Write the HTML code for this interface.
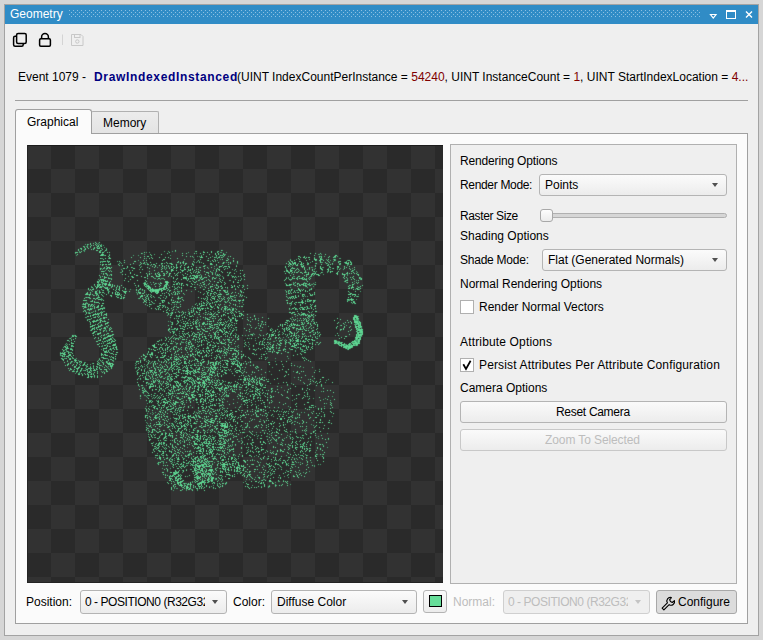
<!DOCTYPE html>
<html><head><meta charset="utf-8">
<style>
*{margin:0;padding:0;box-sizing:border-box}
html,body{width:763px;height:640px;overflow:hidden;background:#d6d6d6;font-family:"Liberation Sans",sans-serif;font-size:12px;color:#000}
.a{position:absolute}
.t{position:absolute;white-space:pre;line-height:14px;font-size:12px}
#win{left:4px;top:4px;width:755px;height:632px;border:1px solid #a3a3a3;background:#efefef}
#title{left:5px;top:5px;width:753px;height:19px;background:#308cc6}
.combo{position:absolute;border:1px solid #b4b4b4;border-radius:3px;background:linear-gradient(#fbfbfb,#ececec)}
.combo .arr{position:absolute;width:0;height:0;border-left:3.7px solid transparent;border-right:3.7px solid transparent;border-top:4.3px solid #505050}
.btn{position:absolute;border:1px solid #b4b4b4;border-radius:3px;background:linear-gradient(#fafafa,#ececec)}
</style></head><body>
<div id="win" class="a"></div>
<div id="title" class="a"></div>
<!-- title dots -->
<svg class="a" style="left:0;top:0" width="763" height="30">
  <defs>
    <pattern id="dots" x="69" y="10" width="4" height="4" patternUnits="userSpaceOnUse">
      <rect x="0" y="0" width="1" height="1" fill="#8cc0e2"/>
      <rect x="2" y="2" width="1" height="1" fill="#8cc0e2"/>
    </pattern>
  </defs>
  <rect x="69" y="10" width="632" height="8" fill="url(#dots)"/>
  <!-- dropdown tri -->
  <path d="M710.5 14.5 L716 14.5 L713.25 18 Z" fill="none" stroke="#fff" stroke-width="1.2"/>
  <!-- maximize -->
  <rect x="726.5" y="10.5" width="9" height="8" fill="none" stroke="#fff" stroke-width="1"/>
  <rect x="726" y="10" width="10" height="2" fill="#fff"/>
  <!-- close -->
  <path d="M746 11.5 L752 17.5 M752 11.5 L746 17.5" stroke="#fff" stroke-width="1.4"/>
</svg>
<div class="t" style="left:10px;top:7px;color:#fff">Geometry</div>

<!-- toolbar icons -->
<svg class="a" style="left:0;top:28px" width="100" height="24">
  <rect x="13.6" y="8.2" width="9.6" height="10" rx="1.5" fill="none" stroke="#000" stroke-width="1.5"/>
  <rect x="16.6" y="5.4" width="9.6" height="10" rx="1.5" fill="#efefef" stroke="#000" stroke-width="1.5"/>
  <path d="M41.6 10.5 V9 A3.4 3.4 0 0 1 48.4 9 V10.5" fill="none" stroke="#000" stroke-width="1.5"/>
  <rect x="39.6" y="10.8" width="10.8" height="7.4" rx="1.2" fill="none" stroke="#000" stroke-width="1.5"/>
  <rect x="62" y="6.5" width="1" height="10.5" fill="#d4d4d4"/>
  <path d="M71.5 6.5 H81 L83 8.5 V17.5 H71.5 Z" fill="none" stroke="#c8c8c8" stroke-width="1"/>
  <rect x="74.5" y="6.5" width="5.5" height="3" fill="none" stroke="#c8c8c8" stroke-width="1"/>
  <circle cx="77.3" cy="13.5" r="1.7" fill="none" stroke="#c8c8c8" stroke-width="1"/>
</svg>

<!-- event line -->
<div class="t" style="left:18px;top:70px">Event 1079 -</div>
<div class="t" style="left:94px;top:70px;font-weight:bold;color:#000080;letter-spacing:0.66px">DrawIndexedInstanced</div>
<div class="t" style="left:237px;top:70px">(UINT IndexCountPerInstance = <span style="color:#800000">54240</span>, UINT InstanceCount = <span style="color:#800000">1</span>, UINT StartIndexLocation = <span style="color:#800000">4...</span></div>
<div class="a" style="left:15px;top:100px;width:733px;height:1px;background:#a0a0a0"></div>

<!-- tabs -->
<div class="a" style="left:15px;top:133px;width:733px;height:491px;border:1px solid #a0a0a0;background:#fbfbfb"></div>
<div class="a" style="left:91px;top:111px;width:68px;height:22px;border:1px solid #b0b0b0;border-bottom:none;border-radius:2px 2px 0 0;background:linear-gradient(#ececec,#e4e4e4)"></div>
<div class="a" style="left:15px;top:109px;width:77px;height:25px;border:1px solid #a0a0a0;border-bottom:none;border-radius:3px 3px 0 0;background:#fbfbfb"></div>
<div class="t" style="left:27px;top:115px">Graphical</div>
<div class="t" style="left:103px;top:116px">Memory</div>

<!-- viewport -->
<svg id="vp" class="a" style="left:27px;top:145px" width="416" height="438">
<defs><filter id="soft" x="0" y="0" width="416" height="438" filterUnits="userSpaceOnUse"><feConvolveMatrix order="3" kernelMatrix="0.01 0.08 0.01 0.08 0.64 0.08 0.01 0.08 0.01" preserveAlpha="false"/></filter><pattern id="chk" width="48" height="48" patternUnits="userSpaceOnUse"><rect width="48" height="48" fill="#2a2a2a"/><rect width="24" height="24" fill="#323232"/><rect x="24" y="24" width="24" height="24" fill="#323232"/></pattern></defs>
<rect width="416" height="438" fill="url(#chk)"/>
<rect x="0" y="0" width="416" height="1" fill="#1c1c1c"/><rect x="0" y="0" width="1" height="438" fill="#252525"/><rect x="0" y="437" width="416" height="1" fill="#232323"/>
<g filter="url(#soft)"><g transform="translate(0 .5)" stroke-width="1"><path d="M68 97h1m3 0h1M63 98h1m2 0h1m2 0h1M60 99h1m2 0h1m4 0h1M64 100h1m1 0h1m2 0h1m1 0h1m1 0h1M56 101h1m6 0h1m6 0h1m0 0h1m2 0h1M57 102h1m2 0h1m6 0h1m4 0h1M53 103h1m0 0h1m3 0h1m2 0h1m5 0h1m2 0h1m0 0h1m0 0h1m1 0h1M51 104h1m2 0h1m3 0h1m5 0h1m1 0h1m8 0h1m3 0h1M51 105h1m17 0h1m0 0h1m2 0h1m4 0h1m69 0h1m45 0h1M54 106h1m17 0h1m96 0h1m14 0h1m6 0h1M48 107h1m0 0h1m0 0h1m2 0h1m18 0h1m0 0h1m1 0h1m0 0h1m3 0h1m1 0h1m34 0h1m24 0h1m33 0h1m0 0h1m2 0h1m3 0h1m5 0h1M114 108h1m25 0h1m14 0h1m3 0h1m7 0h1m5 0h1m14 0h1m2 0h1m4 0h1m86 0h1m4 0h1m4 0h1M50 109h1m23 0h1m0 0h1m0 0h1m46 0h1m10 0h1m41 0h1m5 0h1m5 0h1m2 0h1m4 0h1m101 0h1M73 110h1m0 0h1m0 0h1m2 0h1m3 0h1m41 0h1m30 0h1m33 0h1m3 0h1m1 0h1m1 0h1m89 0h1m20 0h1m0 0h1M81 111h1m35 0h1m2 0h1m0 0h1m37 0h1m3 0h1m1 0h1m8 0h1m4 0h1m16 0h1m6 0h1m67 0h1m0 0h1m4 0h1m14 0h1m1 0h1m7 0h1m4 0h1m0 0h1M82 112h1m21 0h1m8 0h1m10 0h1m7 0h1m5 0h1m2 0h1m31 0h1m0 0h1m0 0h1m7 0h1m3 0h1m3 0h1m0 0h1m1 0h1m78 0h1m2 0h1m0 0h1m1 0h1m1 0h1m0 0h1m11 0h1m6 0h1m4 0h1M73 113h1m4 0h1m3 0h1m0 0h1m33 0h1m4 0h1m2 0h1m17 0h1m6 0h1m30 0h1m8 0h1m9 0h1m5 0h1m64 0h1m6 0h1m8 0h1m5 0h1M76 114h1m59 0h1m0 0h1m35 0h1m13 0h1m7 0h1m5 0h1m70 0h1m9 0h1m4 0h1m0 0h1m0 0h1m3 0h1m0 0h1m6 0h1m5 0h1M97 115h1m18 0h1m2 0h1m15 0h1m35 0h1m9 0h1m3 0h1m2 0h1m10 0h1m0 0h1m5 0h1m56 0h1m3 0h1m11 0h1m8 0h1m3 0h1m0 0h1m2 0h1m3 0h1m6 0h1m13 0h1m0 0h1M76 116h1m0 0h1m0 0h1m1 0h1m1 0h1m9 0h1m14 0h1m0 0h1m42 0h1m4 0h1m9 0h1m19 0h1m19 0h1m3 0h1m50 0h1m2 0h1m7 0h1m0 0h1m11 0h1m7 0h1m7 0h1m10 0h1m0 0h1m9 0h1M73 117h1m7 0h1m15 0h1m15 0h1m3 0h1m5 0h1m15 0h1m10 0h1m2 0h1m2 0h1m15 0h1m18 0h1m4 0h1m4 0h1m1 0h1m6 0h1m51 0h1m2 0h1m1 0h1m0 0h1m5 0h1m18 0h1m4 0h1m3 0h1m8 0h1m6 0h1m0 0h1m1 0h1m1 0h1M83 118h1m22 0h1m7 0h1m1 0h1m12 0h1m4 0h1m0 0h1m4 0h1m2 0h1m0 0h1m8 0h1m2 0h1m1 0h1m0 0h1m5 0h1m10 0h1m6 0h1m0 0h1m11 0h1m6 0h1m55 0h1m2 0h1m0 0h1m2 0h1m0 0h1m0 0h1m5 0h1m1 0h1m4 0h1m7 0h1m9 0h1m5 0h1m7 0h1m5 0h1m0 0h1m0 0h1m2 0h1M73 119h1m1 0h1m0 0h1m1 0h1m0 0h1m1 0h1m0 0h1m0 0h1m7 0h1m11 0h1m9 0h1m6 0h1m0 0h1m2 0h1m1 0h1m0 0h1m16 0h1m0 0h1m3 0h1m8 0h1m6 0h1m17 0h1m0 0h1m4 0h1m11 0h1m59 0h1m1 0h1m0 0h1m1 0h1m1 0h1m1 0h1m2 0h1m0 0h1m5 0h1m13 0h1m6 0h1m1 0h1m8 0h1m10 0h1m0 0h1M75 120h1m16 0h1m2 0h1m16 0h1m15 0h1m3 0h1m2 0h1m3 0h1m9 0h1m4 0h1m2 0h1m8 0h1m28 0h1m66 0h1m6 0h1m0 0h1m5 0h1m11 0h1m11 0h1M79 121h1m20 0h1m24 0h1m2 0h1m6 0h1m1 0h1m3 0h1m2 0h1m1 0h1m6 0h1m7 0h1m2 0h1m11 0h1m0 0h1m14 0h1m0 0h1m0 0h1m2 0h1m0 0h1m0 0h1m1 0h1m7 0h1m48 0h1m2 0h1m12 0h1m0 0h1m0 0h1m11 0h1m4 0h1m8 0h1m7 0h1m0 0h1m5 0h1m4 0h1M77 122h1m2 0h1m0 0h1m0 0h1m1 0h1m15 0h1m3 0h1m8 0h1m6 0h1m6 0h1m16 0h1m2 0h1m1 0h1m0 0h1m2 0h1m3 0h1m2 0h1m0 0h1m7 0h1m2 0h1m0 0h1m6 0h1m3 0h1m7 0h1m3 0h1m5 0h1m55 0h1m6 0h1m9 0h1m1 0h1m4 0h1m10 0h1m9 0h1m7 0h1m7 0h1m7 0h1M73 123h1m2 0h1m2 0h1m0 0h1m1 0h1m0 0h1m12 0h1m0 0h1m8 0h1m0 0h1m14 0h1m12 0h1m6 0h1m3 0h1m2 0h1m15 0h1m11 0h1m12 0h1m9 0h1m63 0h1m1 0h1m0 0h1m2 0h1m6 0h1m4 0h1m10 0h1m0 0h1m11 0h1m10 0h1m4 0h1M73 124h1m41 0h1m18 0h1m9 0h1m0 0h1m7 0h1m3 0h1m0 0h1m2 0h1m1 0h1m1 0h1m3 0h1m1 0h1m17 0h1m1 0h1m0 0h1m4 0h1m10 0h1m54 0h1m5 0h1m1 0h1m5 0h1m7 0h1m8 0h1m0 0h1m4 0h1m0 0h1m10 0h1m10 0h1m3 0h1M81 125h1m23 0h1m21 0h1m16 0h1m0 0h1m3 0h1m5 0h1m0 0h1m6 0h1m3 0h1m5 0h1m15 0h1m2 0h1m20 0h1m1 0h1m43 0h1m0 0h1m2 0h1m0 0h1m3 0h1m16 0h1m15 0h1m23 0h1M74 126h1m0 0h1m0 0h1m5 0h1m1 0h1m10 0h1m26 0h1m11 0h1m0 0h1m3 0h1m4 0h1m10 0h1m4 0h1m8 0h1m1 0h1m5 0h1m5 0h1m5 0h1m4 0h1m62 0h1m2 0h1m2 0h1m0 0h1m6 0h1m6 0h1m8 0h1m15 0h1m1 0h1m5 0h1m12 0h1M103 127h1m9 0h1m17 0h1m8 0h1m10 0h1m1 0h1m9 0h1m4 0h1m2 0h1m0 0h1m6 0h1m0 0h1m14 0h1m4 0h1m2 0h1m57 0h1m0 0h1m2 0h1m1 0h1m1 0h1m0 0h1m2 0h1m0 0h1m2 0h1m0 0h1m2 0h1m12 0h1m8 0h1m6 0h1m9 0h1m5 0h1M76 128h1m1 0h1m0 0h1m23 0h1m15 0h1m2 0h1m5 0h1m1 0h1m5 0h1m2 0h1m2 0h1m0 0h1m3 0h1m2 0h1m7 0h1m5 0h1m5 0h1m10 0h1m3 0h1m16 0h1m4 0h1m5 0h1m44 0h1m16 0h1m5 0h1m3 0h1m0 0h1m1 0h1m20 0h1m0 0h1m4 0h1m3 0h1m0 0h1m1 0h1m1 0h1m2 0h1m1 0h1M76 129h1m7 0h1m10 0h1m2 0h1m8 0h1m14 0h1m5 0h1m2 0h1m0 0h1m4 0h1m4 0h1m6 0h1m10 0h1m17 0h1m6 0h1m4 0h1m1 0h1m24 0h1m48 0h1m12 0h1m0 0h1m0 0h1m2 0h1m0 0h1m1 0h1m1 0h1m0 0h1m0 0h1m18 0h1m4 0h1m0 0h1m0 0h1m12 0h1m0 0h1M72 130h1m7 0h1m3 0h1m24 0h1m0 0h1m9 0h1m8 0h1m2 0h1m0 0h1m2 0h1m0 0h1m4 0h1m5 0h1m1 0h1m5 0h1m6 0h1m1 0h1m0 0h1m0 0h1m1 0h1m2 0h1m8 0h1m9 0h1m9 0h1m14 0h1m46 0h1m13 0h1m6 0h1m6 0h1m0 0h1m24 0h1m13 0h1M75 131h1m1 0h1m27 0h1m8 0h1m5 0h1m3 0h1m0 0h1m3 0h1m0 0h1m0 0h1m0 0h1m8 0h1m2 0h1m22 0h1m0 0h1m1 0h1m3 0h1m7 0h1m22 0h1m0 0h1m1 0h1m2 0h1m1 0h1m3 0h1m53 0h1m0 0h1m6 0h1m3 0h1m33 0h1m8 0h1M73 132h1m3 0h1m0 0h1m0 0h1m25 0h1m0 0h1m10 0h1m0 0h1m7 0h1m19 0h1m9 0h1m0 0h1m0 0h1m7 0h1m1 0h1m0 0h1m0 0h1m3 0h1m2 0h1m1 0h1m6 0h1m20 0h1m57 0h1m4 0h1m4 0h1m6 0h1m33 0h1m2 0h1m3 0h1m1 0h1m6 0h1M77 133h1m3 0h1m0 0h1m15 0h1m21 0h1m10 0h1m0 0h1m13 0h1m3 0h1m5 0h1m1 0h1m0 0h1m1 0h1m1 0h1m0 0h1m0 0h1m0 0h1m0 0h1m5 0h1m2 0h1m8 0h1m1 0h1m0 0h1m3 0h1m3 0h1m62 0h1m5 0h1m1 0h1m1 0h1m2 0h1m1 0h1m0 0h1m1 0h1m5 0h1m33 0h1m8 0h1m5 0h1m1 0h1M73 134h1m0 0h1m0 0h1m0 0h1m7 0h1m18 0h1m33 0h1m11 0h1m4 0h1m6 0h1m5 0h1m6 0h1m0 0h1m5 0h1m11 0h1m14 0h1m8 0h1m40 0h1m3 0h1m1 0h1m5 0h1m5 0h1m1 0h1m0 0h1m2 0h1m41 0h1m2 0h1m6 0h1M72 135h1m1 0h1m1 0h1m0 0h1m0 0h1m18 0h1m12 0h1m7 0h1m41 0h1m10 0h1m7 0h1m2 0h1m12 0h1m15 0h1m1 0h1m43 0h1m61 0h1m0 0h1m10 0h1M70 136h1m5 0h1m1 0h1m0 0h1m0 0h1m2 0h1m17 0h1m17 0h1m18 0h1m0 0h1m0 0h1m5 0h1m1 0h1m17 0h1m2 0h1m7 0h1m5 0h1m3 0h1m5 0h1m12 0h1m73 0h1m37 0h1M70 137h1m0 0h1m2 0h1m0 0h1m6 0h1m43 0h1m11 0h1m0 0h1m0 0h1m0 0h1m9 0h1m15 0h1m0 0h1m6 0h1m0 0h1m13 0h1m0 0h1m2 0h1m2 0h1m8 0h1m3 0h1m0 0h1m56 0h1m51 0h1m4 0h1m3 0h1m1 0h1M76 138h1m1 0h1m0 0h1m2 0h1m24 0h1m9 0h1m0 0h1m9 0h1m4 0h1m0 0h1m4 0h1m0 0h1m9 0h1m1 0h1m1 0h1m0 0h1m8 0h1m8 0h1m8 0h1m15 0h1m71 0h1m0 0h1m4 0h1m1 0h1m0 0h1m2 0h1m47 0h1M67 139h1m2 0h1m1 0h1m0 0h1m1 0h1m1 0h1m0 0h1m0 0h1m1 0h1m0 0h1m0 0h1m1 0h1m31 0h1m0 0h1m0 0h1m7 0h1m4 0h1m5 0h1m0 0h1m0 0h1m5 0h1m0 0h1m1 0h1m4 0h1m4 0h1m5 0h1m4 0h1m5 0h1m0 0h1m3 0h1m3 0h1m3 0h1m7 0h1m61 0h1m2 0h1m0 0h1m0 0h1m1 0h1m3 0h1m1 0h1m1 0h1m0 0h1m0 0h1m4 0h1m6 0h1m36 0h1m0 0h1M70 140h1m1 0h1m5 0h1m2 0h1m0 0h1m0 0h1m1 0h1m1 0h1m6 0h1m13 0h1m2 0h1m5 0h1m3 0h1m11 0h1m3 0h1m1 0h1m14 0h1m1 0h1m3 0h1m13 0h1m14 0h1m14 0h1m2 0h1m4 0h1m7 0h1m38 0h1m0 0h1m1 0h1m5 0h1m3 0h1m0 0h1m2 0h1m1 0h1m4 0h1m38 0h1m12 0h1M68 141h1m1 0h1m0 0h1m1 0h1m2 0h1m8 0h1m4 0h1m1 0h1m18 0h1m6 0h1m1 0h1m0 0h1m0 0h1m5 0h1m3 0h1m4 0h1m0 0h1m0 0h1m5 0h1m18 0h1m18 0h1m0 0h1m0 0h1m5 0h1m1 0h1m0 0h1m10 0h1m1 0h1m2 0h1m5 0h1m53 0h1m8 0h1m41 0h1m3 0h1m7 0h1M65 142h1m3 0h1m0 0h1m1 0h1m0 0h1m0 0h1m2 0h1m2 0h1m3 0h1m4 0h1m2 0h1m3 0h1m24 0h1m0 0h1m0 0h1m12 0h1m0 0h1m1 0h1m2 0h1m7 0h1m1 0h1m1 0h1m12 0h1m5 0h1m4 0h1m4 0h1m4 0h1m2 0h1m3 0h1m2 0h1m1 0h1m3 0h1m0 0h1m5 0h1m3 0h1m108 0h1m0 0h1m0 0h1m4 0h1M61 143h1m7 0h1m8 0h1m0 0h1m0 0h1m11 0h1m5 0h1m14 0h1m6 0h1m0 0h1m1 0h1m1 0h1m6 0h1m1 0h1m0 0h1m0 0h1m2 0h1m8 0h1m5 0h1m26 0h1m7 0h1m0 0h1m3 0h1m25 0h1m50 0h1m12 0h1m36 0h1m0 0h1m1 0h1m4 0h1m0 0h1m2 0h1M61 144h1m1 0h1m1 0h1m0 0h1m7 0h1m5 0h1m0 0h1m4 0h1m2 0h1m1 0h1m6 0h1m10 0h1m2 0h1m2 0h1m5 0h1m1 0h1m0 0h1m0 0h1m0 0h1m1 0h1m0 0h1m0 0h1m0 0h1m0 0h1m0 0h1m0 0h1m1 0h1m0 0h1m0 0h1m2 0h1m5 0h1m20 0h1m7 0h1m7 0h1m1 0h1m21 0h1m8 0h1m46 0h1m6 0h1m0 0h1m3 0h1m7 0h1m41 0h1m3 0h1m0 0h1M64 145h1m11 0h1m11 0h1m3 0h1m2 0h1m13 0h1m1 0h1m5 0h1m4 0h1m0 0h1m1 0h1m0 0h1m0 0h1m0 0h1m0 0h1m0 0h1m0 0h1m2 0h1m0 0h1m4 0h1m2 0h1m10 0h1m4 0h1m21 0h1m0 0h1m7 0h1m1 0h1m0 0h1m2 0h1m0 0h1m15 0h1m48 0h1m1 0h1m7 0h1m0 0h1m1 0h1m2 0h1m3 0h1M68 146h1m0 0h1m2 0h1m16 0h1m6 0h1m0 0h1m0 0h1m0 0h1m2 0h1m20 0h1m1 0h1m0 0h1m1 0h1m0 0h1m0 0h1m0 0h1m2 0h1m7 0h1m4 0h1m2 0h1m3 0h1m24 0h1m4 0h1m0 0h1m11 0h1m2 0h1m13 0h1m44 0h1m1 0h1m5 0h1m5 0h1m4 0h1m1 0h1m40 0h1m6 0h1M60 147h1m2 0h1m4 0h1m3 0h1m0 0h1m1 0h1m0 0h1m4 0h1m3 0h1m2 0h1m1 0h1m0 0h1m5 0h1m0 0h1m12 0h1m0 0h1m0 0h1m3 0h1m6 0h1m3 0h1m1 0h1m0 0h1m7 0h1m6 0h1m1 0h1m24 0h1m7 0h1m5 0h1m0 0h1m9 0h1m0 0h1m5 0h1m2 0h1m5 0h1m1 0h1m49 0h1m1 0h1m2 0h1m15 0h1M59 148h1m0 0h1m7 0h1m0 0h1m15 0h1m2 0h1m3 0h1m5 0h1m13 0h1m0 0h1m1 0h1m0 0h1m12 0h1m0 0h1m4 0h1m1 0h1m3 0h1m2 0h1m3 0h1m1 0h1m1 0h1m3 0h1m23 0h1m2 0h1m0 0h1m1 0h1m2 0h1m11 0h1m2 0h1m6 0h1m49 0h1m0 0h1m1 0h1m17 0h1m40 0h1m0 0h1M58 149h1m0 0h1m0 0h1m1 0h1m0 0h1m1 0h1m4 0h1m3 0h1m4 0h1m8 0h1m0 0h1m0 0h1m0 0h1m0 0h1m28 0h1m20 0h1m5 0h1m1 0h1m25 0h1m10 0h1m3 0h1m0 0h1m0 0h1m0 0h1m4 0h1m0 0h1m12 0h1m45 0h1m15 0h1m0 0h1m6 0h1m1 0h1m1 0h1m33 0h1m0 0h1m0 0h1m1 0h1m0 0h1m0 0h1m0 0h1M62 150h1m3 0h1m2 0h1m1 0h1m3 0h1m7 0h1m0 0h1m8 0h1m3 0h1m16 0h1m0 0h1m1 0h1m2 0h1m3 0h1m8 0h1m8 0h1m38 0h1m1 0h1m6 0h1m16 0h1m1 0h1m3 0h1m1 0h1m52 0h1m6 0h1m7 0h1m0 0h1m43 0h1M84 151h1m4 0h1m4 0h1m18 0h1m0 0h1m0 0h1m4 0h1m2 0h1m2 0h1m12 0h1m39 0h1m5 0h1m0 0h1m1 0h1m2 0h1m0 0h1m0 0h1m9 0h1m0 0h1m0 0h1m8 0h1m44 0h1m5 0h1m0 0h1m1 0h1m2 0h1m4 0h1m46 0h1m3 0h1m2 0h1M59 152h1m1 0h1m0 0h1m8 0h1m0 0h1m17 0h1m0 0h1m4 0h1m0 0h1m15 0h1m4 0h1m5 0h1m20 0h1m5 0h1m2 0h1m16 0h1m8 0h1m3 0h1m12 0h1m3 0h1m17 0h1m42 0h1m1 0h1m1 0h1m1 0h1m0 0h1m51 0h1M57 153h1m5 0h1m2 0h1m0 0h1m1 0h1m0 0h1m22 0h1m0 0h1m1 0h1m15 0h1m2 0h1m3 0h1m1 0h1m11 0h1m4 0h1m11 0h1m0 0h1m1 0h1m20 0h1m1 0h1m1 0h1m6 0h1m0 0h1m0 0h1m4 0h1m1 0h1m1 0h1m3 0h1m1 0h1m1 0h1m56 0h1m1 0h1m1 0h1m1 0h1m56 0h1M68 154h1m2 0h1m0 0h1m0 0h1m42 0h1m1 0h1m2 0h1m22 0h1m10 0h1m21 0h1m2 0h1m2 0h1m3 0h1m2 0h1m4 0h1m1 0h1m7 0h1m10 0h1m63 0h1m0 0h1m38 0h1m0 0h1m1 0h1m0 0h1m0 0h1m0 0h1M56 155h1m0 0h1m0 0h1m0 0h1m5 0h1m10 0h1m40 0h1m1 0h1m2 0h1m5 0h1m6 0h1m0 0h1m0 0h1m6 0h1m1 0h1m9 0h1m22 0h1m4 0h1m6 0h1m2 0h1m6 0h1m2 0h1m1 0h1m0 0h1m0 0h1m2 0h1m0 0h1m0 0h1m1 0h1m0 0h1m42 0h1m0 0h1m14 0h1m6 0h1m0 0h1m0 0h1m1 0h1m0 0h1m36 0h1M64 156h1m0 0h1m1 0h1m49 0h1m0 0h1m5 0h1m10 0h1m12 0h1m1 0h1m2 0h1m20 0h1m5 0h1m8 0h1m0 0h1m2 0h1m6 0h1m11 0h1m52 0h1m9 0h1m2 0h1m1 0h1m6 0h1m32 0h1m5 0h1M67 157h1m1 0h1m0 0h1m0 0h1m44 0h1m2 0h1m2 0h1m2 0h1m9 0h1m5 0h1m3 0h1m0 0h1m0 0h1m2 0h1m25 0h1m4 0h1m3 0h1m1 0h1m10 0h1m3 0h1m57 0h1m3 0h1m4 0h1m1 0h1m0 0h1m1 0h1m0 0h1m0 0h1m9 0h1m37 0h1m1 0h1m0 0h1M56 158h1m1 0h1m1 0h1m11 0h1m2 0h1m0 0h1m56 0h1m38 0h1m1 0h1m2 0h1m2 0h1m2 0h1m19 0h1m56 0h1m1 0h1m0 0h1m3 0h1m7 0h1m2 0h1m49 0h1M56 159h1m0 0h1m0 0h1m2 0h1m0 0h1m1 0h1m0 0h1m52 0h1m3 0h1m0 0h1m29 0h1m14 0h1m3 0h1m6 0h1m2 0h1m5 0h1m2 0h1m1 0h1m12 0h1m1 0h1m59 0h1m4 0h1m9 0h1M61 160h1m2 0h1m1 0h1m4 0h1m2 0h1m0 0h1m44 0h1m11 0h1m0 0h1m1 0h1m34 0h1m3 0h1m0 0h1m0 0h1m2 0h1m3 0h1m8 0h1m9 0h1m5 0h1m64 0h1m10 0h1m3 0h1M55 161h1m0 0h1m1 0h1m2 0h1m1 0h1m1 0h1m1 0h1m2 0h1m0 0h1m2 0h1m47 0h1m7 0h1m0 0h1m4 0h1m10 0h1m5 0h1m19 0h1m9 0h1m0 0h1m5 0h1m6 0h1m0 0h1m13 0h1m1 0h1m0 0h1m67 0h1m3 0h1m0 0h1M57 162h1m0 0h1m8 0h1m1 0h1m0 0h1m61 0h1m2 0h1m2 0h1m1 0h1m5 0h1m3 0h1m0 0h1m15 0h1m16 0h1m0 0h1m4 0h1m0 0h1m3 0h1m2 0h1m1 0h1m66 0h1m6 0h1m0 0h1m1 0h1m2 0h1m3 0h1M56 163h1m6 0h1m3 0h1m5 0h1m0 0h1m0 0h1m1 0h1m46 0h1m3 0h1m2 0h1m9 0h1m2 0h1m21 0h1m1 0h1m1 0h1m0 0h1m0 0h1m1 0h1m0 0h1m0 0h1m1 0h1m1 0h1m0 0h1m9 0h1m5 0h1m0 0h1m7 0h1m55 0h1m2 0h1m0 0h1m1 0h1m3 0h1m3 0h1m3 0h1m3 0h1m3 0h1M60 164h1m0 0h1m1 0h1m0 0h1m6 0h1m0 0h1m2 0h1m53 0h1m1 0h1m1 0h1m6 0h1m5 0h1m26 0h1m1 0h1m7 0h1m10 0h1m3 0h1m2 0h1m0 0h1m2 0h1m0 0h1m2 0h1m58 0h1m4 0h1m1 0h1m0 0h1m0 0h1m1 0h1m6 0h1M57 165h1m4 0h1m76 0h1m2 0h1m2 0h1m18 0h1m1 0h1m5 0h1m0 0h1m4 0h1m12 0h1m13 0h1M56 166h1m1 0h1m9 0h1m67 0h1m14 0h1m3 0h1m10 0h1m2 0h1m26 0h1m7 0h1m3 0h1m3 0h1m3 0h1m53 0h1m10 0h1m6 0h1m0 0h1M59 167h1m13 0h1m1 0h1m63 0h1m0 0h1m4 0h1m2 0h1m3 0h1m3 0h1m1 0h1m3 0h1m1 0h1m5 0h1m1 0h1m5 0h1m4 0h1m7 0h1m0 0h1m5 0h1m4 0h1m1 0h1m3 0h1m52 0h1m0 0h1m1 0h1m0 0h1m0 0h1m6 0h1m7 0h1M59 168h1m2 0h1m5 0h1m1 0h1m1 0h1m1 0h1m4 0h1m61 0h1m3 0h1m10 0h1m5 0h1m21 0h1m2 0h1m12 0h1m0 0h1m2 0h1m7 0h1m0 0h1m0 0h1m49 0h1m6 0h1m4 0h1m0 0h1M66 169h1m0 0h1m0 0h1m0 0h1m1 0h1m2 0h1m2 0h1m0 0h1m0 0h1m61 0h1m2 0h1m10 0h1m6 0h1m4 0h1m4 0h1m5 0h1m1 0h1m2 0h1m0 0h1m1 0h1m2 0h1m0 0h1m5 0h1m0 0h1m9 0h1m6 0h1m0 0h1m4 0h1m46 0h1m0 0h1m3 0h1m1 0h1m0 0h1m0 0h1m1 0h1m1 0h1m3 0h1m1 0h1M63 170h1m1 0h1m0 0h1m7 0h1m4 0h1m63 0h1m5 0h1m2 0h1m1 0h1m10 0h1m19 0h1m8 0h1m1 0h1m10 0h1m4 0h1m1 0h1m1 0h1m10 0h1m42 0h1m7 0h1m0 0h1m1 0h1m0 0h1m1 0h1m0 0h1m2 0h1m38 0h1m0 0h1M60 171h1m0 0h1m1 0h1m6 0h1m1 0h1m79 0h1m4 0h1m5 0h1m0 0h1m8 0h1m10 0h1m1 0h1m0 0h1m3 0h1m2 0h1m13 0h1m1 0h1m1 0h1m14 0h1m53 0h1m1 0h1m43 0h1m0 0h1m0 0h1m0 0h1M67 172h1m0 0h1m2 0h1m4 0h1m0 0h1m1 0h1m63 0h1m11 0h1m1 0h1m18 0h1m1 0h1m4 0h1m17 0h1m21 0h1m11 0h1m29 0h1m14 0h1m45 0h1m0 0h1m0 0h1m0 0h1m0 0h1M64 173h1m8 0h1m2 0h1m0 0h1m69 0h1m3 0h1m7 0h1m20 0h1m4 0h1m2 0h1m4 0h1m8 0h1m2 0h1m0 0h1m1 0h1m6 0h1m12 0h1m12 0h1m21 0h1m9 0h1m2 0h1m1 0h1m2 0h1m28 0h1m15 0h1m0 0h1m1 0h1m0 0h1m0 0h1M62 174h1m9 0h1m8 0h1m73 0h1m6 0h1m3 0h1m3 0h1m9 0h1m0 0h1m0 0h1m9 0h1m1 0h1m8 0h1m4 0h1m11 0h1m4 0h1m2 0h1m37 0h1m1 0h1m8 0h1m1 0h1m5 0h1m0 0h1m26 0h1m12 0h1m0 0h1m2 0h1M60 175h1m8 0h1m0 0h1m2 0h1m0 0h1m75 0h1m18 0h1m16 0h1m4 0h1m1 0h1m9 0h1m4 0h1m0 0h1m0 0h1m10 0h1m9 0h1m27 0h1m0 0h1m0 0h1m5 0h1m4 0h1m1 0h1m1 0h1m2 0h1m1 0h1m25 0h1m12 0h1m6 0h1M62 176h1m2 0h1m0 0h1m0 0h1m0 0h1m4 0h1m1 0h1m1 0h1m0 0h1m72 0h1m4 0h1m1 0h1m7 0h1m1 0h1m11 0h1m1 0h1m0 0h1m0 0h1m1 0h1m11 0h1m4 0h1m5 0h1m13 0h1m11 0h1m26 0h1m2 0h1m13 0h1m0 0h1m3 0h1m38 0h1m3 0h1m0 0h1m0 0h1m0 0h1m1 0h1M63 177h1m2 0h1m6 0h1m6 0h1m0 0h1m63 0h1m5 0h1m8 0h1m4 0h1m3 0h1m2 0h1m3 0h1m13 0h1m2 0h1m0 0h1m1 0h1m2 0h1m38 0h1m19 0h1m0 0h1m14 0h1m6 0h1m5 0h1m1 0h1m21 0h1m6 0h1m2 0h1m2 0h1m2 0h1m0 0h1m0 0h1m0 0h1m1 0h1m0 0h1M71 178h1m6 0h1m0 0h1m0 0h1m64 0h1m4 0h1m5 0h1m0 0h1m1 0h1m3 0h1m2 0h1m1 0h1m6 0h1m0 0h1m0 0h1m2 0h1m1 0h1m1 0h1m8 0h1m3 0h1m4 0h1m4 0h1m1 0h1m21 0h1m28 0h1m3 0h1m1 0h1m8 0h1m4 0h1m0 0h1m1 0h1m3 0h1m22 0h1m5 0h1m7 0h1m5 0h1m0 0h1m1 0h1M63 179h1m4 0h1m1 0h1m3 0h1m3 0h1m66 0h1m12 0h1m7 0h1m8 0h1m0 0h1m1 0h1m3 0h1m0 0h1m3 0h1m0 0h1m0 0h1m0 0h1m1 0h1m1 0h1m0 0h1m0 0h1m4 0h1m2 0h1m15 0h1m15 0h1m1 0h1m14 0h1m1 0h1m1 0h1m0 0h1m5 0h1m1 0h1m0 0h1m0 0h1m1 0h1m3 0h1m1 0h1m6 0h1m4 0h1m1 0h1m38 0h1m1 0h1m1 0h1M65 180h1m0 0h1m0 0h1m6 0h1m6 0h1m59 0h1m10 0h1m5 0h1m2 0h1m1 0h1m0 0h1m7 0h1m11 0h1m0 0h1m6 0h1m2 0h1m2 0h1m2 0h1m1 0h1m1 0h1m17 0h1m9 0h1m19 0h1m1 0h1m4 0h1m1 0h1m1 0h1m2 0h1m1 0h1m0 0h1m1 0h1m11 0h1m5 0h1m23 0h1m13 0h1m2 0h1m0 0h1m0 0h1M63 181h1m0 0h1m0 0h1m5 0h1m0 0h1m0 0h1m5 0h1m64 0h1m11 0h1m1 0h1m10 0h1m7 0h1m4 0h1m0 0h1m6 0h1m9 0h1m1 0h1m30 0h1m17 0h1m3 0h1m7 0h1m11 0h1m14 0h1m19 0h1m6 0h1m5 0h1m4 0h1m0 0h1m0 0h1m0 0h1m1 0h1m0 0h1M67 182h1m1 0h1m1 0h1m5 0h1m5 0h1m73 0h1m4 0h1m6 0h1m13 0h1m1 0h1m1 0h1m3 0h1m5 0h1m6 0h1m3 0h1m0 0h1m14 0h1m10 0h1m23 0h1m1 0h1m3 0h1m0 0h1m0 0h1m8 0h1m5 0h1m3 0h1m22 0h1m7 0h1m4 0h1m5 0h1m0 0h1m1 0h1m0 0h1m0 0h1M65 183h1m0 0h1m2 0h1m4 0h1m2 0h1m0 0h1m3 0h1m1 0h1m57 0h1m4 0h1m0 0h1m1 0h1m2 0h1m1 0h1m4 0h1m3 0h1m0 0h1m4 0h1m3 0h1m3 0h1m1 0h1m1 0h1m3 0h1m2 0h1m7 0h1m0 0h1m7 0h1m10 0h1m10 0h1m3 0h1m22 0h1m1 0h1m1 0h1m2 0h1m3 0h1m2 0h1m0 0h1m2 0h1m2 0h1m7 0h1m5 0h1m25 0h1m12 0h1m0 0h1M65 184h1m1 0h1m2 0h1m1 0h1m0 0h1m9 0h1m57 0h1m0 0h1m6 0h1m0 0h1m5 0h1m0 0h1m12 0h1m0 0h1m0 0h1m2 0h1m9 0h1m7 0h1m2 0h1m25 0h1m20 0h1m6 0h1m8 0h1m1 0h1m0 0h1m8 0h1m0 0h1m0 0h1m3 0h1m11 0h1m23 0h1m0 0h1m1 0h1m7 0h1m4 0h1m1 0h1m0 0h1m0 0h1m0 0h1m0 0h1M64 185h1m12 0h1m4 0h1m58 0h1m34 0h1m0 0h1m5 0h1m6 0h1m1 0h1m0 0h1m0 0h1m2 0h1m8 0h1m12 0h1m23 0h1m4 0h1m8 0h1m2 0h1m17 0h1m0 0h1m1 0h1m3 0h1m0 0h1m36 0h1m6 0h1m0 0h1m0 0h1m0 0h1m0 0h1M67 186h1m1 0h1m6 0h1m7 0h1m0 0h1m59 0h1m9 0h1m0 0h1m16 0h1m4 0h1m0 0h1m0 0h1m8 0h1m4 0h1m0 0h1m3 0h1m2 0h1m2 0h1m16 0h1m23 0h1m1 0h1m3 0h1m4 0h1m4 0h1m0 0h1m7 0h1m3 0h1m45 0h1m7 0h1m3 0h1m0 0h1m0 0h1M66 187h1m0 0h1m5 0h1m69 0h1m2 0h1m14 0h1m4 0h1m4 0h1m14 0h1m1 0h1m2 0h1m3 0h1m2 0h1m0 0h1m0 0h1m44 0h1m17 0h1m0 0h1m5 0h1m11 0h1m0 0h1m4 0h1m1 0h1m1 0h1m37 0h1m0 0h1m0 0h1m0 0h1m0 0h1m0 0h1M65 188h1m0 0h1m4 0h1m0 0h1m0 0h1m6 0h1m0 0h1m64 0h1m8 0h1m1 0h1m2 0h1m4 0h1m1 0h1m7 0h1m6 0h1m4 0h1m9 0h1m3 0h1m2 0h1m35 0h1m6 0h1m8 0h1m7 0h1m0 0h1m1 0h1m1 0h1m5 0h1m1 0h1m10 0h1m21 0h1m19 0h1m0 0h1m3 0h1M70 189h1m0 0h1m5 0h1m1 0h1m5 0h1m0 0h1m61 0h1m9 0h1m2 0h1m3 0h1m2 0h1m0 0h1m2 0h1m1 0h1m2 0h1m9 0h1m0 0h1m2 0h1m4 0h1m1 0h1m4 0h1m20 0h1m0 0h1m13 0h1m2 0h1m1 0h1m0 0h1m0 0h1m5 0h1m5 0h1m8 0h1m8 0h1m9 0h1m0 0h1m5 0h1m28 0h1m6 0h1m1 0h1m0 0h1m0 0h1m0 0h1m0 0h1M45 190h1m2 0h1m17 0h1m7 0h1m1 0h1m4 0h1m1 0h1m0 0h1m71 0h1m5 0h1m1 0h1m2 0h1m4 0h1m8 0h1m1 0h1m4 0h1m17 0h1m1 0h1m6 0h1m5 0h1m3 0h1m7 0h1m2 0h1m5 0h1m2 0h1m0 0h1m1 0h1m2 0h1m8 0h1m3 0h1m1 0h1m0 0h1m1 0h1m1 0h1m11 0h1m8 0h1m18 0h1m17 0h1m1 0h1m0 0h1m0 0h1m0 0h1M45 191h1m0 0h1m1 0h1m0 0h1m30 0h1m0 0h1m0 0h1m0 0h1m61 0h1m7 0h1m0 0h1m2 0h1m4 0h1m3 0h1m0 0h1m7 0h1m1 0h1m0 0h1m9 0h1m1 0h1m3 0h1m3 0h1m1 0h1m7 0h1m2 0h1m30 0h1m1 0h1m23 0h1m6 0h1m1 0h1m3 0h1m36 0h1m0 0h1m9 0h1m1 0h1M68 192h1m5 0h1m4 0h1m5 0h1m52 0h1m2 0h1m2 0h1m7 0h1m2 0h1m4 0h1m8 0h1m1 0h1m3 0h1m7 0h1m3 0h1m1 0h1m1 0h1m0 0h1m9 0h1m1 0h1m5 0h1m20 0h1m9 0h1m6 0h1m0 0h1m2 0h1m8 0h1m7 0h1m1 0h1m3 0h1m9 0h1m2 0h1m25 0h1m13 0h1m0 0h1m0 0h1m0 0h1m0 0h1m0 0h1M43 193h1m4 0h1m18 0h1m3 0h1m4 0h1m0 0h1m0 0h1m4 0h1m55 0h1m3 0h1m2 0h1m2 0h1m16 0h1m5 0h1m5 0h1m0 0h1m7 0h1m1 0h1m1 0h1m19 0h1m8 0h1m3 0h1m11 0h1m6 0h1m4 0h1m2 0h1m13 0h1m3 0h1m4 0h1m3 0h1m0 0h1m10 0h1m21 0h1m4 0h1m11 0h1m0 0h1m2 0h1M46 194h1m26 0h1m2 0h1m5 0h1m0 0h1m0 0h1m2 0h1m54 0h1m5 0h1m2 0h1m3 0h1m0 0h1m0 0h1m1 0h1m5 0h1m2 0h1m3 0h1m12 0h1m10 0h1m3 0h1m0 0h1m4 0h1m3 0h1m0 0h1m25 0h1m2 0h1m22 0h1m6 0h1m0 0h1m9 0h1m0 0h1m1 0h1m0 0h1m43 0h1m1 0h1m0 0h1m0 0h1M40 195h1m0 0h1m2 0h1m27 0h1m0 0h1m8 0h1m2 0h1m2 0h1m43 0h1m5 0h1m23 0h1m5 0h1m5 0h1m2 0h1m1 0h1m12 0h1m4 0h1m7 0h1m47 0h1m0 0h1m4 0h1m3 0h1m2 0h1m2 0h1m0 0h1m5 0h1m3 0h1m4 0h1m1 0h1m19 0h1m0 0h1m18 0h1m3 0h1m0 0h1M47 196h1m21 0h1m0 0h1m4 0h1m1 0h1m0 0h1m1 0h1m3 0h1m1 0h1m0 0h1m42 0h1m0 0h1m9 0h1m2 0h1m1 0h1m12 0h1m3 0h1m6 0h1m1 0h1m1 0h1m9 0h1m23 0h1m24 0h1m1 0h1m16 0h1m5 0h1m4 0h1m5 0h1m0 0h1m0 0h1m1 0h1m1 0h1m0 0h1m1 0h1m2 0h1m25 0h1m0 0h1m0 0h1m15 0h1m0 0h1m0 0h1m0 0h1m2 0h1m0 0h1M44 197h1m37 0h1m1 0h1m76 0h1m0 0h1m11 0h1m6 0h1m0 0h1m3 0h1m6 0h1m0 0h1m3 0h1m3 0h1m0 0h1m0 0h1m13 0h1m2 0h1m10 0h1m4 0h1m2 0h1m18 0h1m1 0h1m28 0h1m2 0h1m14 0h1m0 0h1m1 0h1m0 0h1m1 0h1m9 0h1m3 0h1m0 0h1m1 0h1M44 198h1m0 0h1m0 0h1m25 0h1m1 0h1m5 0h1m0 0h1m1 0h1m52 0h1m6 0h1m0 0h1m5 0h1m2 0h1m7 0h1m2 0h1m15 0h1m6 0h1m2 0h1m0 0h1m2 0h1m0 0h1m0 0h1m0 0h1m9 0h1m21 0h1m12 0h1m7 0h1m2 0h1m0 0h1m3 0h1m4 0h1m2 0h1m0 0h1m2 0h1m11 0h1m2 0h1m6 0h1m14 0h1m0 0h1m1 0h1m0 0h1m1 0h1m0 0h1m2 0h1m4 0h1m0 0h1m1 0h1m0 0h1m0 0h1m0 0h1m0 0h1m0 0h1m0 0h1m0 0h1M42 199h1m27 0h1m0 0h1m14 0h1m0 0h1m0 0h1m38 0h1m3 0h1m1 0h1m1 0h1m3 0h1m13 0h1m8 0h1m1 0h1m9 0h1m5 0h1m2 0h1m14 0h1m2 0h1m16 0h1m13 0h1m2 0h1m3 0h1m3 0h1m2 0h1m4 0h1m0 0h1m10 0h1m3 0h1m1 0h1m1 0h1m2 0h1m10 0h1m2 0h1m2 0h1m19 0h1m2 0h1m0 0h1m0 0h1m0 0h1m3 0h1m0 0h1m3 0h1m2 0h1m0 0h1M39 200h1m4 0h1m0 0h1m31 0h1m0 0h1m1 0h1m4 0h1m0 0h1m0 0h1m37 0h1m0 0h1m0 0h1m6 0h1m3 0h1m1 0h1m18 0h1m5 0h1m0 0h1m5 0h1m1 0h1m7 0h1m0 0h1m4 0h1m12 0h1m24 0h1m10 0h1m7 0h1m3 0h1m3 0h1m11 0h1m1 0h1m0 0h1m0 0h1m6 0h1m1 0h1m33 0h1m0 0h1m0 0h1m1 0h1m2 0h1m0 0h1m1 0h1m1 0h1m0 0h1m0 0h1m0 0h1m1 0h1M37 201h1m0 0h1m1 0h1m3 0h1m1 0h1m25 0h1m7 0h1m1 0h1m6 0h1m36 0h1m0 0h1m14 0h1m4 0h1m13 0h1m1 0h1m7 0h1m16 0h1m2 0h1m10 0h1m14 0h1m22 0h1m4 0h1m12 0h1m5 0h1m0 0h1m0 0h1m9 0h1m0 0h1m3 0h1m3 0h1m28 0h1m2 0h1m0 0h1m0 0h1m0 0h1m0 0h1m0 0h1m0 0h1m0 0h1m0 0h1M38 202h1m1 0h1m38 0h1m6 0h1m1 0h1m0 0h1m37 0h1m0 0h1m0 0h1m3 0h1m0 0h1m5 0h1m0 0h1m4 0h1m2 0h1m4 0h1m4 0h1m3 0h1m3 0h1m12 0h1m4 0h1m0 0h1m10 0h1m3 0h1m35 0h1m3 0h1m2 0h1m0 0h1m0 0h1m5 0h1m15 0h1m2 0h1m7 0h1m1 0h1m2 0h1m31 0h1m0 0h1m0 0h1m0 0h1m1 0h1m0 0h1m0 0h1m0 0h1M39 203h1m0 0h1m0 0h1m34 0h1m0 0h1m0 0h1m0 0h1m3 0h1m2 0h1m2 0h1m42 0h1m2 0h1m4 0h1m5 0h1m4 0h1m6 0h1m3 0h1m1 0h1m4 0h1m6 0h1m2 0h1m1 0h1m9 0h1m2 0h1m6 0h1m1 0h1m0 0h1m0 0h1m2 0h1m13 0h1m8 0h1m3 0h1m3 0h1m3 0h1m18 0h1m10 0h1m5 0h1m5 0h1m33 0h1m1 0h1m0 0h1M35 204h1m2 0h1m4 0h1m0 0h1m38 0h1m3 0h1m1 0h1m34 0h1m1 0h1m3 0h1m4 0h1m2 0h1m1 0h1m2 0h1m2 0h1m5 0h1m1 0h1m3 0h1m6 0h1m5 0h1m12 0h1m12 0h1m1 0h1m0 0h1m6 0h1m18 0h1m0 0h1m5 0h1m6 0h1m1 0h1m0 0h1m2 0h1m9 0h1m1 0h1m5 0h1m0 0h1m14 0h1m2 0h1m37 0h1M36 205h1m8 0h1m30 0h1m4 0h1m45 0h1m0 0h1m7 0h1m1 0h1m20 0h1m16 0h1m2 0h1m1 0h1m0 0h1m1 0h1m5 0h1m1 0h1m1 0h1m6 0h1m1 0h1m0 0h1m2 0h1m0 0h1m0 0h1m1 0h1m16 0h1m22 0h1m0 0h1m3 0h1m20 0h1M40 206h1m36 0h1m0 0h1m0 0h1m1 0h1m4 0h1m34 0h1m11 0h1m6 0h1m2 0h1m4 0h1m1 0h1m12 0h1m0 0h1m3 0h1m3 0h1m3 0h1m2 0h1m2 0h1m5 0h1m1 0h1m1 0h1m1 0h1m1 0h1m2 0h1m10 0h1m3 0h1m28 0h1m1 0h1m1 0h1m10 0h1M37 207h1m3 0h1m2 0h1m33 0h1m1 0h1m1 0h1m6 0h1m0 0h1m30 0h1m9 0h1m4 0h1m1 0h1m9 0h1m5 0h1m5 0h1m9 0h1m0 0h1m0 0h1m4 0h1m2 0h1m4 0h1m7 0h1m3 0h1m0 0h1m1 0h1m10 0h1m33 0h1m3 0h1m0 0h1m0 0h1m9 0h1m15 0h1m0 0h1M33 208h1m0 0h1m0 0h1m0 0h1m0 0h1m3 0h1m3 0h1m28 0h1m9 0h1m0 0h1m38 0h1m0 0h1m8 0h1m0 0h1m2 0h1m8 0h1m17 0h1m4 0h1m2 0h1m0 0h1m6 0h1m2 0h1m13 0h1m7 0h1m1 0h1m2 0h1m13 0h1m0 0h1m12 0h1m10 0h1m3 0h1m18 0h1M36 209h1m0 0h1m0 0h1m3 0h1m0 0h1m30 0h1m0 0h1m1 0h1m0 0h1m7 0h1m1 0h1m0 0h1m26 0h1m3 0h1m1 0h1m0 0h1m0 0h1m0 0h1m18 0h1m4 0h1m1 0h1m9 0h1m1 0h1m1 0h1m0 0h1m1 0h1m10 0h1m11 0h1m13 0h1m0 0h1m1 0h1m2 0h1m2 0h1m1 0h1m10 0h1m1 0h1m6 0h1m0 0h1m32 0h1m3 0h1M35 210h1m5 0h1m0 0h1m0 0h1m2 0h1m27 0h1m3 0h1m0 0h1m0 0h1m35 0h1m0 0h1m17 0h1m1 0h1m0 0h1m16 0h1m7 0h1m0 0h1m6 0h1m6 0h1m0 0h1m4 0h1m4 0h1m7 0h1m18 0h1m49 0h1M35 211h1m1 0h1m1 0h1m0 0h1m3 0h1m37 0h1m1 0h1m3 0h1m25 0h1m3 0h1m0 0h1m3 0h1m13 0h1m10 0h1m0 0h1m2 0h1m2 0h1m1 0h1m1 0h1m0 0h1m5 0h1m8 0h1m3 0h1m10 0h1m1 0h1m12 0h1m2 0h1m0 0h1m4 0h1m0 0h1m2 0h1m15 0h1m25 0h1M41 212h1m3 0h1m29 0h1m0 0h1m8 0h1m0 0h1m31 0h1m5 0h1m4 0h1m0 0h1m2 0h1m0 0h1m0 0h1m0 0h1m6 0h1m0 0h1m2 0h1m5 0h1m0 0h1m1 0h1m3 0h1m14 0h1m11 0h1m1 0h1m7 0h1m11 0h1m4 0h1m6 0h1m16 0h1m36 0h1M34 213h1m4 0h1m3 0h1m2 0h1m29 0h1m0 0h1m0 0h1m7 0h1m1 0h1m23 0h1m3 0h1m26 0h1m5 0h1m1 0h1m5 0h1m0 0h1m9 0h1m15 0h1m4 0h1m3 0h1m8 0h1m3 0h1m0 0h1m3 0h1m10 0h1m9 0h1m1 0h1m41 0h1M35 214h1m0 0h1m5 0h1m0 0h1m4 0h1m23 0h1m10 0h1m0 0h1m32 0h1m22 0h1m0 0h1m6 0h1m0 0h1m0 0h1m6 0h1m1 0h1m8 0h1m0 0h1m0 0h1m4 0h1m0 0h1m11 0h1m14 0h1m0 0h1m1 0h1m1 0h1m29 0h1m40 0h1M36 215h1m10 0h1m0 0h1m0 0h1m23 0h1m1 0h1m5 0h1m3 0h1m27 0h1m3 0h1m3 0h1m9 0h1m6 0h1m2 0h1m7 0h1m3 0h1m8 0h1m4 0h1m2 0h1m3 0h1m20 0h1m1 0h1m1 0h1m0 0h1m8 0h1m67 0h1m3 0h1M40 216h1m3 0h1m3 0h1m3 0h1m0 0h1m16 0h1m8 0h1m29 0h1m0 0h1m0 0h1m1 0h1m8 0h1m4 0h1m9 0h1m1 0h1m6 0h1m0 0h1m3 0h1m5 0h1m0 0h1m3 0h1m1 0h1m5 0h1m0 0h1m4 0h1m0 0h1m3 0h1m7 0h1m3 0h1m6 0h1m0 0h1m2 0h1m1 0h1m11 0h1m4 0h1m30 0h1m4 0h1m23 0h1M37 217h1m11 0h1m0 0h1m3 0h1m16 0h1m3 0h1m3 0h1m2 0h1m30 0h1m7 0h1m5 0h1m6 0h1m1 0h1m2 0h1m4 0h1m4 0h1m4 0h1m2 0h1m3 0h1m11 0h1m1 0h1m0 0h1m4 0h1m1 0h1m0 0h1m0 0h1m0 0h1m1 0h1m3 0h1m5 0h1m6 0h1m6 0h1m10 0h1m17 0h1m0 0h1M41 218h1m1 0h1m6 0h1m6 0h1m8 0h1m3 0h1m1 0h1m3 0h1m3 0h1m0 0h1m0 0h1m0 0h1m0 0h1m0 0h1m25 0h1m9 0h1m4 0h1m1 0h1m1 0h1m13 0h1m2 0h1m2 0h1m6 0h1m0 0h1m0 0h1m2 0h1m10 0h1m0 0h1m6 0h1m1 0h1m2 0h1m1 0h1m0 0h1m1 0h1m1 0h1m5 0h1m0 0h1m3 0h1m0 0h1m0 0h1m0 0h1m4 0h1m1 0h1m1 0h1m2 0h1m44 0h1M40 219h1m0 0h1m4 0h1m5 0h1m3 0h1m0 0h1m2 0h1m9 0h1m0 0h1m4 0h1m4 0h1m0 0h1m0 0h1m1 0h1m0 0h1m33 0h1m5 0h1m1 0h1m4 0h1m4 0h1m5 0h1m1 0h1m0 0h1m1 0h1m1 0h1m22 0h1m5 0h1m4 0h1m0 0h1m1 0h1m2 0h1m4 0h1m2 0h1m6 0h1m1 0h1m0 0h1m0 0h1m2 0h1m0 0h1m27 0h1m6 0h1m5 0h1M38 220h1m1 0h1m4 0h1m3 0h1m3 0h1m2 0h1m15 0h1m0 0h1m4 0h1m4 0h1m1 0h1m28 0h1m11 0h1m12 0h1m4 0h1m0 0h1m13 0h1m1 0h1m1 0h1m0 0h1m2 0h1m0 0h1m2 0h1m1 0h1m9 0h1m2 0h1m0 0h1m5 0h1m6 0h1m9 0h1m0 0h1m1 0h1m0 0h1m8 0h1m2 0h1m37 0h1m2 0h1M47 221h1m0 0h1m11 0h1m5 0h1m2 0h1m9 0h1m3 0h1m0 0h1m30 0h1m10 0h1m8 0h1m1 0h1m2 0h1m3 0h1m2 0h1m1 0h1m0 0h1m6 0h1m1 0h1m24 0h1m2 0h1m7 0h1m8 0h1m5 0h1m1 0h1m17 0h1m25 0h1m16 0h1M47 222h1m3 0h1m0 0h1m10 0h1m6 0h1m1 0h1m4 0h1m6 0h1m26 0h1m12 0h1m5 0h1m0 0h1m1 0h1m1 0h1m4 0h1m2 0h1m8 0h1m3 0h1m1 0h1m1 0h1m2 0h1m5 0h1m2 0h1m4 0h1m1 0h1m3 0h1m0 0h1m1 0h1m0 0h1m0 0h1m1 0h1m2 0h1m3 0h1m1 0h1m12 0h1m2 0h1m2 0h1m9 0h1M41 223h1m1 0h1m5 0h1m0 0h1m0 0h1m2 0h1m6 0h1m0 0h1m1 0h1m1 0h1m2 0h1m2 0h1m11 0h1m27 0h1m9 0h1m4 0h1m6 0h1m7 0h1m2 0h1m4 0h1m8 0h1m0 0h1m11 0h1m2 0h1m6 0h1m1 0h1m0 0h1m2 0h1m19 0h1m4 0h1m15 0h1M43 224h1m0 0h1m2 0h1m2 0h1m3 0h1m4 0h1m0 0h1m2 0h1m3 0h1m1 0h1m3 0h1m0 0h1m2 0h1m0 0h1m0 0h1m31 0h1m2 0h1m13 0h1m2 0h1m5 0h1m0 0h1m0 0h1m4 0h1m2 0h1m1 0h1m2 0h1m0 0h1m6 0h1m9 0h1m0 0h1m0 0h1m8 0h1m1 0h1m1 0h1m0 0h1m1 0h1m4 0h1m3 0h1m3 0h1m1 0h1m9 0h1m20 0h1m20 0h1m5 0h1M42 225h1m10 0h1m4 0h1m4 0h1m2 0h1m0 0h1m0 0h1m10 0h1m30 0h1m3 0h1m2 0h1m4 0h1m0 0h1m0 0h1m0 0h1m2 0h1m3 0h1m0 0h1m11 0h1m5 0h1m4 0h1m0 0h1m1 0h1m0 0h1m0 0h1m4 0h1m1 0h1m6 0h1m5 0h1m1 0h1m3 0h1m7 0h1m2 0h1m0 0h1m9 0h1m0 0h1m0 0h1m0 0h1m18 0h1m20 0h1M45 226h1m0 0h1m2 0h1m0 0h1m2 0h1m6 0h1m1 0h1m7 0h1m8 0h1m0 0h1m36 0h1m6 0h1m2 0h1m4 0h1m4 0h1m7 0h1m5 0h1m6 0h1m0 0h1m0 0h1m1 0h1m1 0h1m0 0h1m1 0h1m0 0h1m1 0h1m0 0h1m8 0h1m2 0h1m0 0h1m1 0h1m3 0h1m3 0h1m0 0h1m12 0h1m3 0h1m0 0h1m3 0h1m52 0h1m3 0h1m1 0h1m15 0h1M61 227h1m0 0h1m0 0h1m3 0h1m7 0h1m1 0h1m32 0h1m8 0h1m1 0h1m1 0h1m1 0h1m1 0h1m0 0h1m0 0h1m4 0h1m5 0h1m8 0h1m1 0h1m8 0h1m0 0h1m1 0h1m2 0h1m1 0h1m0 0h1m2 0h1m1 0h1m1 0h1m0 0h1m5 0h1m1 0h1m0 0h1m0 0h1m10 0h1m10 0h1m0 0h1m3 0h1m4 0h1m5 0h1m1 0h1m10 0h1m20 0h1m9 0h1m0 0h1m16 0h1M54 228h1m2 0h1m2 0h1m3 0h1m5 0h1m6 0h1m32 0h1m4 0h1m0 0h1m0 0h1m8 0h1m6 0h1m5 0h1m7 0h1m0 0h1m5 0h1m3 0h1m0 0h1m0 0h1m1 0h1m4 0h1m7 0h1m6 0h1m7 0h1m1 0h1m5 0h1m0 0h1m5 0h1m9 0h1m56 0h1M51 229h1m0 0h1m2 0h1m2 0h1m2 0h1m2 0h1m1 0h1m43 0h1m13 0h1m1 0h1m2 0h1m1 0h1m6 0h1m3 0h1m1 0h1m4 0h1m10 0h1m2 0h1m10 0h1m1 0h1m0 0h1m0 0h1m4 0h1m0 0h1m5 0h1m70 0h1M55 230h1m5 0h1m5 0h1m45 0h1m1 0h1m5 0h1m6 0h1m0 0h1m2 0h1m17 0h1m0 0h1m15 0h1m7 0h1m8 0h1m0 0h1m2 0h1m1 0h1m3 0h1m12 0h1m6 0h1m1 0h1m4 0h1m36 0h1m19 0h1M61 231h1m1 0h1m0 0h1m2 0h1m2 0h1m3 0h1m37 0h1m5 0h1m3 0h1m2 0h1m8 0h1m6 0h1m2 0h1m3 0h1m0 0h1m8 0h1m0 0h1m8 0h1m5 0h1m2 0h1m3 0h1m9 0h1m2 0h1m17 0h1m9 0h1m5 0h1m28 0h1m27 0h1M60 232h1m0 0h1m2 0h1m5 0h1m47 0h1m11 0h1m2 0h1m9 0h1m5 0h1m6 0h1m0 0h1m0 0h1m2 0h1m8 0h1m4 0h1m0 0h1m0 0h1m0 0h1m1 0h1m1 0h1m1 0h1m32 0h1m7 0h1m9 0h1m1 0h1m33 0h1m2 0h1m20 0h1m0 0h1M113 233h1m4 0h1m4 0h1m2 0h1m1 0h1m8 0h1m6 0h1m2 0h1m13 0h1m1 0h1m1 0h1m4 0h1m0 0h1m0 0h1m7 0h1m0 0h1m36 0h1m1 0h1m1 0h1m2 0h1m4 0h1m1 0h1m1 0h1m15 0h1m36 0h1M110 234h1m7 0h1m0 0h1m0 0h1m0 0h1m18 0h1m4 0h1m14 0h1m1 0h1m1 0h1m5 0h1m0 0h1m1 0h1m0 0h1m4 0h1m1 0h1m0 0h1m30 0h1m3 0h1m0 0h1m1 0h1m3 0h1m0 0h1m1 0h1m5 0h1m0 0h1m0 0h1m3 0h1m7 0h1m35 0h1m9 0h1M126 235h1m1 0h1m1 0h1m1 0h1m9 0h1m1 0h1m14 0h1m1 0h1m4 0h1m1 0h1m7 0h1m1 0h1m3 0h1m1 0h1m2 0h1m2 0h1m1 0h1m2 0h1m21 0h1m0 0h1m2 0h1m4 0h1m2 0h1m2 0h1m4 0h1m35 0h1M116 236h1m7 0h1m1 0h1m4 0h1m0 0h1m3 0h1m2 0h1m7 0h1m1 0h1m0 0h1m5 0h1m0 0h1m4 0h1m4 0h1m1 0h1m6 0h1m0 0h1m1 0h1m10 0h1m5 0h1m11 0h1m13 0h1m1 0h1m1 0h1m5 0h1m7 0h1m0 0h1m41 0h1m2 0h1m2 0h1m3 0h1M110 237h1m8 0h1m0 0h1m5 0h1m0 0h1m8 0h1m3 0h1m7 0h1m1 0h1m0 0h1m6 0h1m5 0h1m2 0h1m2 0h1m0 0h1m0 0h1m0 0h1m1 0h1m0 0h1m0 0h1m3 0h1m1 0h1m1 0h1m1 0h1m1 0h1m2 0h1m8 0h1m0 0h1m7 0h1m5 0h1m2 0h1m1 0h1m3 0h1m1 0h1m2 0h1m1 0h1m23 0h1m2 0h1m28 0h1m3 0h1m12 0h1M119 238h1m4 0h1m8 0h1m4 0h1m0 0h1m9 0h1m1 0h1m1 0h1m6 0h1m4 0h1m1 0h1m3 0h1m0 0h1m3 0h1m0 0h1m0 0h1m9 0h1m4 0h1m0 0h1m16 0h1m9 0h1m7 0h1m2 0h1m0 0h1m43 0h1m5 0h1m6 0h1M111 239h1m11 0h1m1 0h1m8 0h1m5 0h1m0 0h1m1 0h1m8 0h1m7 0h1m12 0h1m3 0h1m1 0h1m2 0h1m2 0h1m3 0h1m3 0h1m13 0h1m2 0h1m2 0h1m3 0h1m3 0h1m0 0h1m0 0h1m6 0h1m2 0h1m1 0h1m24 0h1m5 0h1m15 0h1m11 0h1M111 240h1m2 0h1m0 0h1m10 0h1m1 0h1m10 0h1m3 0h1m2 0h1m2 0h1m0 0h1m1 0h1m0 0h1m14 0h1m2 0h1m1 0h1m1 0h1m1 0h1m9 0h1m0 0h1m0 0h1m1 0h1m6 0h1m1 0h1m6 0h1m1 0h1m5 0h1m5 0h1m3 0h1m0 0h1m6 0h1m4 0h1m41 0h1m8 0h1m4 0h1M122 241h1m0 0h1m0 0h1m0 0h1m0 0h1m1 0h1m3 0h1m3 0h1m4 0h1m4 0h1m0 0h1m3 0h1m2 0h1m4 0h1m3 0h1m3 0h1m0 0h1m1 0h1m0 0h1m2 0h1m2 0h1m2 0h1m0 0h1m2 0h1m10 0h1m5 0h1m1 0h1m0 0h1m1 0h1m2 0h1m9 0h1m30 0h1m17 0h1M122 242h1m0 0h1m8 0h1m7 0h1m3 0h1m1 0h1m1 0h1m2 0h1m10 0h1m0 0h1m12 0h1m0 0h1m7 0h1m2 0h1m1 0h1m3 0h1m3 0h1m0 0h1m1 0h1m5 0h1m1 0h1m4 0h1m4 0h1m5 0h1m3 0h1m7 0h1m0 0h1M115 243h1m6 0h1m10 0h1m0 0h1m3 0h1m7 0h1m6 0h1m2 0h1m2 0h1m2 0h1m2 0h1m1 0h1m3 0h1m17 0h1m1 0h1m0 0h1m0 0h1m0 0h1m2 0h1m0 0h1m0 0h1m4 0h1m23 0h1m4 0h1m10 0h1m18 0h1m11 0h1m4 0h1m15 0h1M112 244h1m4 0h1m7 0h1m2 0h1m0 0h1m2 0h1m11 0h1m6 0h1m0 0h1m2 0h1m3 0h1m2 0h1m7 0h1m0 0h1m3 0h1m2 0h1m0 0h1m12 0h1m4 0h1m5 0h1m3 0h1m1 0h1m19 0h1m0 0h1m0 0h1m12 0h1m5 0h1m10 0h1m13 0h1m6 0h1M115 245h1m2 0h1m6 0h1m6 0h1m9 0h1m0 0h1m5 0h1m1 0h1m9 0h1m5 0h1m3 0h1m7 0h1m1 0h1m1 0h1m8 0h1m0 0h1m3 0h1m7 0h1m11 0h1m1 0h1m10 0h1m4 0h1m5 0h1m37 0h1m7 0h1m12 0h1m2 0h1M117 246h1m1 0h1m11 0h1m5 0h1m5 0h1m1 0h1m1 0h1m7 0h1m4 0h1m1 0h1m3 0h1m0 0h1m10 0h1m1 0h1m0 0h1m3 0h1m0 0h1m11 0h1m6 0h1m0 0h1m0 0h1m17 0h1m2 0h1m3 0h1m11 0h1m3 0h1m11 0h1m35 0h1M116 247h1m3 0h1m20 0h1m11 0h1m2 0h1m8 0h1m4 0h1m4 0h1m6 0h1m2 0h1m0 0h1m0 0h1m7 0h1m3 0h1m13 0h1m5 0h1m10 0h1m5 0h1m14 0h1m8 0h1m16 0h1m28 0h1M121 248h1m11 0h1m5 0h1m2 0h1m2 0h1m4 0h1m0 0h1m0 0h1m1 0h1m0 0h1m0 0h1m2 0h1m18 0h1m0 0h1m0 0h1m2 0h1m13 0h1m15 0h1m1 0h1m2 0h1m9 0h1m2 0h1m0 0h1m2 0h1m2 0h1m1 0h1M124 249h1m10 0h1m7 0h1m14 0h1m0 0h1m0 0h1m3 0h1m0 0h1m0 0h1m5 0h1m0 0h1m4 0h1m2 0h1m2 0h1m1 0h1m1 0h1m3 0h1m3 0h1m2 0h1m11 0h1m13 0h1m0 0h1m1 0h1m0 0h1m2 0h1m7 0h1m13 0h1m16 0h1m8 0h1M113 250h1m7 0h1m0 0h1m4 0h1m2 0h1m3 0h1m6 0h1m3 0h1m15 0h1m2 0h1m0 0h1m1 0h1m0 0h1m4 0h1m1 0h1m7 0h1m0 0h1m0 0h1m0 0h1m14 0h1m10 0h1m0 0h1m9 0h1m3 0h1m15 0h1m11 0h1m9 0h1m3 0h1m7 0h1M113 251h1m22 0h1m10 0h1m7 0h1m1 0h1m1 0h1m5 0h1m6 0h1m0 0h1m4 0h1m2 0h1m0 0h1m1 0h1m3 0h1m5 0h1m2 0h1m3 0h1m8 0h1m2 0h1m1 0h1m7 0h1m2 0h1m11 0h1m5 0h1m1 0h1m33 0h1m20 0h1M128 252h1m2 0h1m1 0h1m7 0h1m15 0h1m3 0h1m0 0h1m2 0h1m0 0h1m0 0h1m12 0h1m38 0h1m11 0h1m8 0h1m2 0h1m0 0h1m15 0h1m15 0h1m15 0h1M121 253h1m10 0h1m4 0h1m0 0h1m11 0h1m0 0h1m9 0h1m0 0h1m0 0h1m5 0h1m4 0h1m0 0h1m4 0h1m5 0h1m4 0h1m4 0h1m14 0h1m3 0h1m0 0h1m9 0h1m6 0h1m27 0h1m7 0h1m5 0h1m6 0h1M135 254h1m2 0h1m3 0h1m9 0h1m0 0h1m15 0h1m3 0h1m2 0h1m1 0h1m5 0h1m0 0h1m3 0h1m2 0h1m2 0h1m18 0h1m7 0h1m17 0h1m59 0h1m6 0h1M119 255h1m19 0h1m3 0h1m2 0h1m12 0h1m2 0h1m3 0h1m2 0h1m3 0h1m3 0h1m0 0h1m3 0h1m3 0h1m2 0h1m2 0h1m0 0h1m23 0h1m0 0h1m0 0h1m0 0h1m3 0h1m6 0h1m1 0h1m1 0h1m4 0h1m3 0h1m48 0h1M122 256h1m0 0h1m1 0h1m4 0h1m0 0h1m4 0h1m0 0h1m3 0h1m6 0h1m5 0h1m0 0h1m7 0h1m9 0h1m0 0h1m3 0h1m4 0h1m0 0h1m10 0h1m20 0h1m0 0h1M122 257h1m1 0h1m6 0h1m4 0h1m0 0h1m0 0h1m0 0h1m0 0h1m2 0h1m2 0h1m1 0h1m0 0h1m0 0h1m5 0h1m6 0h1m6 0h1m2 0h1m2 0h1m4 0h1m13 0h1m22 0h1m1 0h1m3 0h1m11 0h1m0 0h1m4 0h1m1 0h1m7 0h1m27 0h1m0 0h1m21 0h1M133 258h1m4 0h1m1 0h1m6 0h1m0 0h1m6 0h1m23 0h1m3 0h1m8 0h1m13 0h1m27 0h1m23 0h1m10 0h1m27 0h1m6 0h1M137 259h1m4 0h1m2 0h1m1 0h1m0 0h1m6 0h1m1 0h1m17 0h1m0 0h1m10 0h1m7 0h1m6 0h1m14 0h1m7 0h1m30 0h1m11 0h1m8 0h1m25 0h1M126 260h1m5 0h1m2 0h1m0 0h1m9 0h1m36 0h1m1 0h1m1 0h1m0 0h1m4 0h1m0 0h1m1 0h1m23 0h1m3 0h1m59 0h1m0 0h1m18 0h1M127 261h1m0 0h1m12 0h1m1 0h1m4 0h1m8 0h1m3 0h1m12 0h1m0 0h1m3 0h1m33 0h1m15 0h1m8 0h1m30 0h1M126 262h1m0 0h1m6 0h1m1 0h1m2 0h1m0 0h1m5 0h1m5 0h1m0 0h1m0 0h1m1 0h1m4 0h1m3 0h1m5 0h1m4 0h1m2 0h1m2 0h1m12 0h1m16 0h1m7 0h1m8 0h1m8 0h1m3 0h1m4 0h1m3 0h1m11 0h1m18 0h1m1 0h1m1 0h1m18 0h1M118 263h1m2 0h1m5 0h1m1 0h1m0 0h1m3 0h1m4 0h1m5 0h1m3 0h1m1 0h1m19 0h1m3 0h1m2 0h1m5 0h1m15 0h1m30 0h1m46 0h1m12 0h1m2 0h1m2 0h1m5 0h1M119 264h1m2 0h1m17 0h1m0 0h1m1 0h1m4 0h1m4 0h1m31 0h1m6 0h1m2 0h1m15 0h1m13 0h1m7 0h1m0 0h1m1 0h1m25 0h1m4 0h1m1 0h1m10 0h1m1 0h1m8 0h1m2 0h1M119 265h1m5 0h1m10 0h1m11 0h1m1 0h1m5 0h1m3 0h1m14 0h1m0 0h1m0 0h1m3 0h1m6 0h1m1 0h1m1 0h1m6 0h1m4 0h1m10 0h1m4 0h1m7 0h1m5 0h1m3 0h1m7 0h1m3 0h1M121 266h1m10 0h1m0 0h1m4 0h1m4 0h1m0 0h1m7 0h1m19 0h1m0 0h1m4 0h1m1 0h1m2 0h1m2 0h1m0 0h1m10 0h1m1 0h1m7 0h1m0 0h1m10 0h1m4 0h1m4 0h1m0 0h1m4 0h1m10 0h1m1 0h1m7 0h1m1 0h1m4 0h1m1 0h1m19 0h1m7 0h1m8 0h1M133 267h1m1 0h1m2 0h1m6 0h1m4 0h1m33 0h1m9 0h1m10 0h1m12 0h1m9 0h1m27 0h1m1 0h1m6 0h1m38 0h1M131 268h1m8 0h1m25 0h1m3 0h1m3 0h1m3 0h1m0 0h1m2 0h1m5 0h1m0 0h1m2 0h1m2 0h1m7 0h1m0 0h1m23 0h1m9 0h1m0 0h1m21 0h1m23 0h1m3 0h1m2 0h1m13 0h1M130 269h1m1 0h1m1 0h1m2 0h1m9 0h1m1 0h1m8 0h1m24 0h1m13 0h1m2 0h1m1 0h1m0 0h1m1 0h1m10 0h1m2 0h1m1 0h1m4 0h1m2 0h1m3 0h1m11 0h1m5 0h1m4 0h1m15 0h1m8 0h1m15 0h1M118 270h1m0 0h1m8 0h1m0 0h1m6 0h1m14 0h1m1 0h1m1 0h1m5 0h1m1 0h1m4 0h1m2 0h1m17 0h1m5 0h1m0 0h1m3 0h1m1 0h1m1 0h1m8 0h1m1 0h1m0 0h1m0 0h1m11 0h1m5 0h1m8 0h1m20 0h1m6 0h1m8 0h1M118 271h1m3 0h1m5 0h1m3 0h1m1 0h1m2 0h1m1 0h1m0 0h1m11 0h1m2 0h1m1 0h1m3 0h1m0 0h1m0 0h1m2 0h1m2 0h1m2 0h1m4 0h1m1 0h1m1 0h1m6 0h1m0 0h1m0 0h1m9 0h1m3 0h1m3 0h1m5 0h1m15 0h1m0 0h1m7 0h1m12 0h1m2 0h1m8 0h1m29 0h1m2 0h1M118 272h1m1 0h1m2 0h1m3 0h1m0 0h1m5 0h1m17 0h1m4 0h1m0 0h1m2 0h1m2 0h1m0 0h1m0 0h1m0 0h1m4 0h1m0 0h1m5 0h1m25 0h1m1 0h1m3 0h1m1 0h1m4 0h1m42 0h1m0 0h1m2 0h1m4 0h1m1 0h1m10 0h1m4 0h1m0 0h1M128 273h1m0 0h1m2 0h1m5 0h1m8 0h1m0 0h1m0 0h1m2 0h1m2 0h1m5 0h1m0 0h1m4 0h1m7 0h1m1 0h1m6 0h1m0 0h1m2 0h1m0 0h1m5 0h1m8 0h1m35 0h1m9 0h1m2 0h1m0 0h1m2 0h1m10 0h1m13 0h1M123 274h1m2 0h1m5 0h1m3 0h1m4 0h1m7 0h1m1 0h1m6 0h1m4 0h1m4 0h1m1 0h1m7 0h1m4 0h1m4 0h1m3 0h1m10 0h1m2 0h1m0 0h1m5 0h1m11 0h1m27 0h1m0 0h1m6 0h1m1 0h1m29 0h1M124 275h1m12 0h1m1 0h1m18 0h1m1 0h1m2 0h1m15 0h1m0 0h1m3 0h1m0 0h1m0 0h1m19 0h1m17 0h1m14 0h1m1 0h1m18 0h1m3 0h1m10 0h1m10 0h1m6 0h1m8 0h1M131 276h1m8 0h1m8 0h1m6 0h1m4 0h1m7 0h1m3 0h1m3 0h1m0 0h1m2 0h1m0 0h1m0 0h1m0 0h1m2 0h1m2 0h1m1 0h1m5 0h1m7 0h1m1 0h1m5 0h1m0 0h1m6 0h1m9 0h1m4 0h1m7 0h1m14 0h1m1 0h1m13 0h1M129 277h1m2 0h1m4 0h1m15 0h1m0 0h1m6 0h1m5 0h1m10 0h1m0 0h1m3 0h1m0 0h1m0 0h1m0 0h1m5 0h1m6 0h1m2 0h1m7 0h1m26 0h1m9 0h1m8 0h1m3 0h1m4 0h1m4 0h1m5 0h1m2 0h1m9 0h1m2 0h1m0 0h1m1 0h1m5 0h1m0 0h1M123 278h1m8 0h1m9 0h1m2 0h1m4 0h1m1 0h1m1 0h1m5 0h1m2 0h1m3 0h1m0 0h1m5 0h1m0 0h1m4 0h1m9 0h1m3 0h1m0 0h1m0 0h1m1 0h1m1 0h1m9 0h1m7 0h1m1 0h1m22 0h1m0 0h1m1 0h1m5 0h1m11 0h1m7 0h1m2 0h1m28 0h1M127 279h1m1 0h1m0 0h1m0 0h1m0 0h1m0 0h1m5 0h1m17 0h1m1 0h1m1 0h1m16 0h1m4 0h1m11 0h1m2 0h1m1 0h1m33 0h1m6 0h1m2 0h1m11 0h1m10 0h1M121 280h1m1 0h1m10 0h1m2 0h1m6 0h1m1 0h1m2 0h1m4 0h1m1 0h1m0 0h1m2 0h1m3 0h1m9 0h1m5 0h1m0 0h1m3 0h1m4 0h1m2 0h1m1 0h1m0 0h1m0 0h1m0 0h1m1 0h1m2 0h1m4 0h1m5 0h1m5 0h1m10 0h1m3 0h1m3 0h1m13 0h1m2 0h1m32 0h1m7 0h1M122 281h1m5 0h1m3 0h1m0 0h1m7 0h1m0 0h1m2 0h1m1 0h1m2 0h1m0 0h1m2 0h1m0 0h1m1 0h1m0 0h1m5 0h1m7 0h1m0 0h1m2 0h1m0 0h1m0 0h1m4 0h1m3 0h1m0 0h1m5 0h1m0 0h1m1 0h1m0 0h1m0 0h1m0 0h1m3 0h1m0 0h1m22 0h1m0 0h1m11 0h1m4 0h1m5 0h1m20 0h1m1 0h1m3 0h1m8 0h1M119 282h1m4 0h1m15 0h1m0 0h1m5 0h1m6 0h1m19 0h1m13 0h1m8 0h1m0 0h1m0 0h1m0 0h1m8 0h1m8 0h1m0 0h1m2 0h1m4 0h1m2 0h1m3 0h1m4 0h1m17 0h1m29 0h1m4 0h1M120 283h1m9 0h1m14 0h1m5 0h1m0 0h1m0 0h1m4 0h1m8 0h1m21 0h1m0 0h1m3 0h1m2 0h1m7 0h1m39 0h1m50 0h1m4 0h1M119 284h1m5 0h1m0 0h1m0 0h1m4 0h1m9 0h1m8 0h1m5 0h1m1 0h1m6 0h1m18 0h1m3 0h1m3 0h1m1 0h1m0 0h1m4 0h1m6 0h1m6 0h1m1 0h1m23 0h1m8 0h1m8 0h1m8 0h1M121 285h1m3 0h1m10 0h1m6 0h1m7 0h1m3 0h1m3 0h1m6 0h1m3 0h1m0 0h1m4 0h1m0 0h1m5 0h1m1 0h1m10 0h1m0 0h1m0 0h1m0 0h1m4 0h1m4 0h1m2 0h1m22 0h1m16 0h1m4 0h1m17 0h1m1 0h1m1 0h1m8 0h1M122 286h1m2 0h1m3 0h1m2 0h1m0 0h1m10 0h1m3 0h1m1 0h1m3 0h1m7 0h1m8 0h1m12 0h1m2 0h1m3 0h1m5 0h1m3 0h1m20 0h1m2 0h1m16 0h1m6 0h1m8 0h1m0 0h1m3 0h1m4 0h1m17 0h1m6 0h1M124 287h1m0 0h1m4 0h1m0 0h1m17 0h1m3 0h1m0 0h1m10 0h1m0 0h1m3 0h1m2 0h1m3 0h1m2 0h1m11 0h1m1 0h1m2 0h1m1 0h1m0 0h1m0 0h1m11 0h1m1 0h1m0 0h1m6 0h1m21 0h1m3 0h1m0 0h1m17 0h1m17 0h1M135 288h1m2 0h1m0 0h1m2 0h1m1 0h1m0 0h1m8 0h1m4 0h1m17 0h1m19 0h1m0 0h1m0 0h1m3 0h1m1 0h1m3 0h1m14 0h1m12 0h1m2 0h1m3 0h1m6 0h1m26 0h1m5 0h1m3 0h1M121 289h1m1 0h1m10 0h1m0 0h1m2 0h1m3 0h1m10 0h1m2 0h1m3 0h1m7 0h1m0 0h1m0 0h1m21 0h1m7 0h1m1 0h1m8 0h1m13 0h1m28 0h1m8 0h1m15 0h1M124 290h1m2 0h1m13 0h1m1 0h1m1 0h1m3 0h1m4 0h1m1 0h1m13 0h1m2 0h1m2 0h1m0 0h1m0 0h1m3 0h1m9 0h1m0 0h1m0 0h1m0 0h1m2 0h1m7 0h1m13 0h1m6 0h1m6 0h1m9 0h1m3 0h1m0 0h1m25 0h1m12 0h1m5 0h1M124 291h1m13 0h1m6 0h1m10 0h1m4 0h1m3 0h1m0 0h1m2 0h1m0 0h1m2 0h1m1 0h1m3 0h1m3 0h1m12 0h1m0 0h1m11 0h1m59 0h1M122 292h1m2 0h1m2 0h1m3 0h1m4 0h1m0 0h1m6 0h1m7 0h1m0 0h1m3 0h1m3 0h1m1 0h1m0 0h1m1 0h1m2 0h1m2 0h1m3 0h1m3 0h1m3 0h1m0 0h1m7 0h1m11 0h1m10 0h1m5 0h1m18 0h1m2 0h1m6 0h1m6 0h1m5 0h1m4 0h1m2 0h1m9 0h1M130 293h1m0 0h1m5 0h1m1 0h1m8 0h1m0 0h1m10 0h1m4 0h1m2 0h1m0 0h1m3 0h1m2 0h1m6 0h1m8 0h1m0 0h1m2 0h1m6 0h1m10 0h1m18 0h1m0 0h1m11 0h1m16 0h1m12 0h1m4 0h1m13 0h1m5 0h1M122 294h1m0 0h1m23 0h1m14 0h1m7 0h1m5 0h1m1 0h1m0 0h1m0 0h1m3 0h1m1 0h1m9 0h1m1 0h1m2 0h1m1 0h1m6 0h1m14 0h1m14 0h1m6 0h1m1 0h1m5 0h1m9 0h1m32 0h1M122 295h1m8 0h1m1 0h1m4 0h1m6 0h1m1 0h1m2 0h1m2 0h1m5 0h1m12 0h1m6 0h1m8 0h1m2 0h1m1 0h1m5 0h1m1 0h1m23 0h1m17 0h1m4 0h1m7 0h1m16 0h1M147 296h1m4 0h1m4 0h1m8 0h1m0 0h1m2 0h1m10 0h1m0 0h1m1 0h1m2 0h1m4 0h1m4 0h1m2 0h1m4 0h1m0 0h1m26 0h1m2 0h1m28 0h1m3 0h1M132 297h1m1 0h1m1 0h1m11 0h1m8 0h1m4 0h1m4 0h1m6 0h1m1 0h1m0 0h1m1 0h1m2 0h1m7 0h1m3 0h1m3 0h1m6 0h1m9 0h1m9 0h1m0 0h1m6 0h1m2 0h1m0 0h1m27 0h1m2 0h1m8 0h1m2 0h1m18 0h1M124 298h1m0 0h1m3 0h1m2 0h1m3 0h1m0 0h1m5 0h1m6 0h1m16 0h1m0 0h1m0 0h1m5 0h1m2 0h1m0 0h1m1 0h1m0 0h1m3 0h1m1 0h1m4 0h1m2 0h1m0 0h1m0 0h1m15 0h1m5 0h1m17 0h1m3 0h1m21 0h1m4 0h1m6 0h1m12 0h1M128 299h1m2 0h1m2 0h1m4 0h1m3 0h1m7 0h1m8 0h1m1 0h1m4 0h1m0 0h1m0 0h1m0 0h1m4 0h1m5 0h1m3 0h1m0 0h1m5 0h1m0 0h1m0 0h1m0 0h1m12 0h1m15 0h1m9 0h1m0 0h1m17 0h1m0 0h1m3 0h1m2 0h1m8 0h1m2 0h1m5 0h1m3 0h1m8 0h1m0 0h1m1 0h1M125 300h1m4 0h1m0 0h1m7 0h1m5 0h1m10 0h1m0 0h1m7 0h1m7 0h1m2 0h1m2 0h1m0 0h1m2 0h1m12 0h1m0 0h1m3 0h1m1 0h1m21 0h1m29 0h1m6 0h1m0 0h1m1 0h1m2 0h1m7 0h1m6 0h1M127 301h1m0 0h1m3 0h1m2 0h1m5 0h1m3 0h1m2 0h1m8 0h1m8 0h1m4 0h1m8 0h1m4 0h1m0 0h1m6 0h1m1 0h1m6 0h1m25 0h1m17 0h1m18 0h1m7 0h1m0 0h1m0 0h1m1 0h1m1 0h1m16 0h1M129 302h1m1 0h1m14 0h1m2 0h1m3 0h1m14 0h1m2 0h1m0 0h1m8 0h1m0 0h1m2 0h1m0 0h1m1 0h1m1 0h1m1 0h1m1 0h1m0 0h1m18 0h1m4 0h1m1 0h1m3 0h1m4 0h1m3 0h1m11 0h1m1 0h1m12 0h1m3 0h1m2 0h1m0 0h1m5 0h1m14 0h1M128 303h1m1 0h1m6 0h1m1 0h1m7 0h1m7 0h1m11 0h1m2 0h1m0 0h1m3 0h1m0 0h1m16 0h1m0 0h1m1 0h1m1 0h1m7 0h1m7 0h1m14 0h1m1 0h1m30 0h1m5 0h1m6 0h1m1 0h1m1 0h1m2 0h1m7 0h1m2 0h1M126 304h1m18 0h1m4 0h1m1 0h1m23 0h1m7 0h1m1 0h1m0 0h1m1 0h1m1 0h1m8 0h1m1 0h1m1 0h1m0 0h1m0 0h1m21 0h1m5 0h1m0 0h1m0 0h1m16 0h1m3 0h1m3 0h1m7 0h1m7 0h1m2 0h1m12 0h1M131 305h1m10 0h1m4 0h1m3 0h1m20 0h1m0 0h1m2 0h1m2 0h1m2 0h1m2 0h1m9 0h1m1 0h1m5 0h1m30 0h1m15 0h1m2 0h1m0 0h1m19 0h1m4 0h1m2 0h1m0 0h1m11 0h1M127 306h1m4 0h1m0 0h1m1 0h1m0 0h1m1 0h1m3 0h1m1 0h1m3 0h1m4 0h1m4 0h1m1 0h1m1 0h1m6 0h1m3 0h1m0 0h1m1 0h1m2 0h1m3 0h1m1 0h1m10 0h1m5 0h1m3 0h1m16 0h1m1 0h1m3 0h1m1 0h1m0 0h1m7 0h1m9 0h1m4 0h1m0 0h1m16 0h1m1 0h1m2 0h1m3 0h1M125 307h1m10 0h1m7 0h1m5 0h1m0 0h1m3 0h1m10 0h1m15 0h1m0 0h1m0 0h1m12 0h1m2 0h1m13 0h1m5 0h1m5 0h1m4 0h1m6 0h1m4 0h1m1 0h1m14 0h1m6 0h1m29 0h1M135 308h1m0 0h1m10 0h1m0 0h1m3 0h1m16 0h1m2 0h1m0 0h1m1 0h1m3 0h1m0 0h1m3 0h1m1 0h1m3 0h1m6 0h1m21 0h1m24 0h1m1 0h1m2 0h1m11 0h1m14 0h1M134 309h1m4 0h1m6 0h1m14 0h1m0 0h1m1 0h1m20 0h1m3 0h1m2 0h1m1 0h1m11 0h1m5 0h1m19 0h1m15 0h1m0 0h1m13 0h1m4 0h1m2 0h1m17 0h1m3 0h1m2 0h1M128 310h1m0 0h1m0 0h1m5 0h1m8 0h1m0 0h1m2 0h1m1 0h1m2 0h1m3 0h1m2 0h1m13 0h1m1 0h1m0 0h1m6 0h1m10 0h1m9 0h1m8 0h1m6 0h1m0 0h1m42 0h1m2 0h1m5 0h1m3 0h1m8 0h1M145 311h1m13 0h1m6 0h1m3 0h1m2 0h1m0 0h1m1 0h1m8 0h1m8 0h1m2 0h1m4 0h1m8 0h1m3 0h1m8 0h1m6 0h1m5 0h1m3 0h1m12 0h1m21 0h1m11 0h1m0 0h1m5 0h1M132 312h1m0 0h1m2 0h1m12 0h1m1 0h1m3 0h1m5 0h1m6 0h1m0 0h1m3 0h1m8 0h1m10 0h1m3 0h1m6 0h1m0 0h1m30 0h1m9 0h1m1 0h1m12 0h1m0 0h1m2 0h1m6 0h1m6 0h1m3 0h1m12 0h1M130 313h1m1 0h1m0 0h1m5 0h1m0 0h1m2 0h1m7 0h1m12 0h1m2 0h1m0 0h1m2 0h1m2 0h1m1 0h1m1 0h1m1 0h1m5 0h1m0 0h1m0 0h1m4 0h1m7 0h1m2 0h1m0 0h1m2 0h1m24 0h1m2 0h1m4 0h1m11 0h1m20 0h1m14 0h1m6 0h1M133 314h1m3 0h1m4 0h1m2 0h1m4 0h1m0 0h1m4 0h1m8 0h1m2 0h1m8 0h1m0 0h1m0 0h1m6 0h1m2 0h1m5 0h1m0 0h1m4 0h1m2 0h1m2 0h1m1 0h1m24 0h1m9 0h1m3 0h1m3 0h1m11 0h1m2 0h1m7 0h1M142 315h1m16 0h1m6 0h1m3 0h1m0 0h1m3 0h1m1 0h1m2 0h1m14 0h1m0 0h1m11 0h1m7 0h1m0 0h1m2 0h1m2 0h1m1 0h1m21 0h1m1 0h1m6 0h1m0 0h1m2 0h1m22 0h1m6 0h1M143 316h1m0 0h1m5 0h1m0 0h1m10 0h1m1 0h1m1 0h1m0 0h1m0 0h1m1 0h1m1 0h1m1 0h1m3 0h1m3 0h1m1 0h1m0 0h1m5 0h1m9 0h1m3 0h1m0 0h1m2 0h1m7 0h1m0 0h1m11 0h1m27 0h1m9 0h1m11 0h1m15 0h1M131 317h1m1 0h1m5 0h1m16 0h1m0 0h1m3 0h1m4 0h1m1 0h1m4 0h1m2 0h1m2 0h1m1 0h1m13 0h1m2 0h1m0 0h1m11 0h1m6 0h1m12 0h1m23 0h1m2 0h1m6 0h1m0 0h1m13 0h1M144 318h1m5 0h1m3 0h1m4 0h1m3 0h1m2 0h1m3 0h1m0 0h1m5 0h1m0 0h1m3 0h1m8 0h1m1 0h1m2 0h1m0 0h1m4 0h1m2 0h1m0 0h1m1 0h1m2 0h1m27 0h1m2 0h1m5 0h1m6 0h1m3 0h1m15 0h1M131 319h1m14 0h1m1 0h1m2 0h1m1 0h1m2 0h1m7 0h1m3 0h1m0 0h1m4 0h1m0 0h1m0 0h1m1 0h1m0 0h1m1 0h1m3 0h1m4 0h1m3 0h1m0 0h1m0 0h1m0 0h1m0 0h1m0 0h1m0 0h1m2 0h1m7 0h1m8 0h1m4 0h1m0 0h1m13 0h1m0 0h1m6 0h1m1 0h1m0 0h1m7 0h1m5 0h1m0 0h1m6 0h1m6 0h1M136 320h1m1 0h1m1 0h1m5 0h1m18 0h1m4 0h1m1 0h1m0 0h1m1 0h1m0 0h1m2 0h1m2 0h1m0 0h1m6 0h1m6 0h1m7 0h1m5 0h1m0 0h1m1 0h1m1 0h1m15 0h1m9 0h1m1 0h1m16 0h1m23 0h1M152 321h1m1 0h1m1 0h1m1 0h1m9 0h1m1 0h1m0 0h1m0 0h1m0 0h1m1 0h1m3 0h1m0 0h1m0 0h1m0 0h1m1 0h1m10 0h1m0 0h1m0 0h1m5 0h1m3 0h1m6 0h1m0 0h1m0 0h1m5 0h1m19 0h1m0 0h1m2 0h1m6 0h1m10 0h1M146 322h1m6 0h1m3 0h1m8 0h1m1 0h1m2 0h1m0 0h1m3 0h1m0 0h1m6 0h1m5 0h1m6 0h1m6 0h1m2 0h1m1 0h1m0 0h1m0 0h1m5 0h1m0 0h1m16 0h1m11 0h1m17 0h1m5 0h1m9 0h1M139 323h1m10 0h1m0 0h1m2 0h1m12 0h1m1 0h1m2 0h1m1 0h1m0 0h1m17 0h1m1 0h1m0 0h1m1 0h1m2 0h1m7 0h1m0 0h1m1 0h1m0 0h1m2 0h1m46 0h1M137 324h1m2 0h1m26 0h1m2 0h1m0 0h1m0 0h1m2 0h1m3 0h1m2 0h1m0 0h1m0 0h1m0 0h1m2 0h1m7 0h1m1 0h1m1 0h1m0 0h1m2 0h1m2 0h1m2 0h1m5 0h1m3 0h1m6 0h1m0 0h1m1 0h1m5 0h1m8 0h1m2 0h1m5 0h1m24 0h1M140 325h1m7 0h1m3 0h1m3 0h1m2 0h1m7 0h1m0 0h1m0 0h1m3 0h1m0 0h1m0 0h1m3 0h1m1 0h1m0 0h1m0 0h1m0 0h1m0 0h1m3 0h1m8 0h1m2 0h1m5 0h1m2 0h1m5 0h1m21 0h1m5 0h1m18 0h1m0 0h1m7 0h1M148 326h1m2 0h1m4 0h1m8 0h1m0 0h1m8 0h1m2 0h1m0 0h1m4 0h1m1 0h1m6 0h1m1 0h1m2 0h1m8 0h1m1 0h1m2 0h1m5 0h1m3 0h1m0 0h1m3 0h1m13 0h1m4 0h1m0 0h1m13 0h1m6 0h1M135 327h1m0 0h1m6 0h1m0 0h1m1 0h1m0 0h1m1 0h1m0 0h1m0 0h1m16 0h1m2 0h1m0 0h1m0 0h1m4 0h1m5 0h1m3 0h1m4 0h1m1 0h1m3 0h1m1 0h1m12 0h1m7 0h1m11 0h1m2 0h1m20 0h1m4 0h1m15 0h1M147 328h1m0 0h1m0 0h1m16 0h1m2 0h1m0 0h1m3 0h1m0 0h1m0 0h1m2 0h1m1 0h1m0 0h1m0 0h1m1 0h1m27 0h1m3 0h1m27 0h1m10 0h1m16 0h1m4 0h1M136 329h1m10 0h1m0 0h1m2 0h1m16 0h1m0 0h1m4 0h1m0 0h1m1 0h1m0 0h1m1 0h1m0 0h1m1 0h1m2 0h1m2 0h1m9 0h1m0 0h1m0 0h1m0 0h1m4 0h1m8 0h1m4 0h1m0 0h1m0 0h1m12 0h1m0 0h1m6 0h1m16 0h1m7 0h1m2 0h1M138 330h1m1 0h1m2 0h1m1 0h1m0 0h1m4 0h1m0 0h1m1 0h1m7 0h1m4 0h1m2 0h1m4 0h1m1 0h1m1 0h1m2 0h1m0 0h1m9 0h1m0 0h1m10 0h1m9 0h1m1 0h1m2 0h1m1 0h1m18 0h1m10 0h1m7 0h1m9 0h1m3 0h1M142 331h1m1 0h1m0 0h1m1 0h1m2 0h1m0 0h1m1 0h1m4 0h1m10 0h1m1 0h1m1 0h1m1 0h1m3 0h1m2 0h1m1 0h1m13 0h1m6 0h1m1 0h1m9 0h1m2 0h1m2 0h1m13 0h1m2 0h1m25 0h1m0 0h1m2 0h1m6 0h1M138 332h1m3 0h1m5 0h1m0 0h1m17 0h1m0 0h1m1 0h1m1 0h1m0 0h1m7 0h1m3 0h1m0 0h1m4 0h1m27 0h1m4 0h1m6 0h1m0 0h1m13 0h1m6 0h1m17 0h1M142 333h1m0 0h1m0 0h1m3 0h1m0 0h1m1 0h1m0 0h1m1 0h1m15 0h1m0 0h1m0 0h1m5 0h1m2 0h1m2 0h1m0 0h1m0 0h1m2 0h1m2 0h1m8 0h1m0 0h1m22 0h1m6 0h1m10 0h1m9 0h1M143 334h1m1 0h1m4 0h1m0 0h1m1 0h1m13 0h1m2 0h1m2 0h1m6 0h1m0 0h1m2 0h1m0 0h1m7 0h1m1 0h1m31 0h1M142 335h1m0 0h1m4 0h1m0 0h1m0 0h1m5 0h1m11 0h1m6 0h1m1 0h1m2 0h1m3 0h1m0 0h1m49 0h1m2 0h1m3 0h1m0 0h1m7 0h1M144 336h1m1 0h1m3 0h1m2 0h1m0 0h1m0 0h1m13 0h1m0 0h1m4 0h1m0 0h1m4 0h1m0 0h1m1 0h1m5 0h1m33 0h1m3 0h1m0 0h1m12 0h1m0 0h1m12 0h1m1 0h1m1 0h1M140 337h1m9 0h1m0 0h1m0 0h1m0 0h1m9 0h1m4 0h1m4 0h1m0 0h1m0 0h1m0 0h1m1 0h1m1 0h1m5 0h1m12 0h1m31 0h1m2 0h1m1 0h1m8 0h1m13 0h1M141 338h1m2 0h1m5 0h1m0 0h1m1 0h1m3 0h1m3 0h1m1 0h1m7 0h1m0 0h1m0 0h1m0 0h1m2 0h1m7 0h1m1 0h1m4 0h1m2 0h1m0 0h1m1 0h1m20 0h1m13 0h1m0 0h1m10 0h1m0 0h1m13 0h1M147 339h1m0 0h1m2 0h1m1 0h1m0 0h1m5 0h1m0 0h1m1 0h1m0 0h1m5 0h1m1 0h1m1 0h1m2 0h1m15 0h1m26 0h1m0 0h1m15 0h1m17 0h1M146 340h1m5 0h1m0 0h1m0 0h1m0 0h1m2 0h1m4 0h1m2 0h1m4 0h1m2 0h1m4 0h1m10 0h1m4 0h1m41 0h1m10 0h1m3 0h1m1 0h1m5 0h1M146 341h1m1 0h1m5 0h1m2 0h1m1 0h1m0 0h1m2 0h1m4 0h1m3 0h1m0 0h1m1 0h1m3 0h1m11 0h1m1 0h1m1 0h1m22 0h1m1 0h1m10 0h1m5 0h1m4 0h1M144 342h1m11 0h1m2 0h1m0 0h1m0 0h1m4 0h1m7 0h1m2 0h1m4 0h1m3 0h1m5 0h1m28 0h1m2 0h1m2 0h1m1 0h1m4 0h1M144 343h1m12 0h1m1 0h1m0 0h1m1 0h1m0 0h1m5 0h1m0 0h1m1 0h1m1 0h1m13 0h1m33 0h1M144 344h1m10 0h1m5 0h1m0 0h1M153 345h1m11 0h1m11 0h1" stroke="#5ed692"/><path d="M71 98h1M58 99h1m2 0h1m8 0h1m1 0h1m1 0h1M60 100h1m13 0h1m1 0h1M57 101h1m1 0h1m0 0h1m12 0h1M63 102h1m5 0h1m0 0h1m6 0h1M66 103h1m12 0h1M57 104h1M56 105h1m0 0h1m16 0h1m4 0h1m115 0h1M52 106h1m4 0h1m15 0h1m3 0h1m59 0h1m3 0h1m3 0h1m2 0h1m19 0h1m7 0h1m13 0h1M52 107h1m66 0h1m2 0h1m38 0h1m31 0h1m0 0h1m4 0h1M48 108h1m26 0h1m39 0h1m53 0h1M82 109h1m34 0h1m9 0h1m69 0h1m0 0h1m92 0h1m0 0h1m1 0h1M49 110h1m26 0h1m0 0h1m28 0h1m4 0h1m31 0h1m30 0h1m19 0h1M170 111h1m1 0h1m12 0h1m3 0h1m2 0h1m8 0h1m91 0h1m3 0h1m12 0h1M166 112h1m21 0h1m0 0h1m5 0h1m91 0h1m4 0h1m14 0h1m0 0h1M74 113h1m0 0h1m5 0h1m37 0h1m174 0h1m17 0h1m0 0h1M157 114h1m9 0h1m25 0h1m69 0h1m5 0h1m25 0h1m3 0h1m6 0h1m1 0h1M80 115h1m30 0h1m68 0h1m9 0h1m98 0h1m13 0h1m4 0h1m11 0h1M73 116h1m0 0h1m0 0h1m5 0h1m8 0h1m79 0h1m1 0h1m10 0h1m4 0h1m76 0h1m40 0h1m4 0h1m7 0h1M75 117h1m17 0h1m25 0h1m31 0h1m3 0h1m11 0h1m1 0h1m4 0h1m22 0h1m1 0h1m80 0h1m2 0h1m10 0h1m0 0h1m21 0h1m6 0h1M92 118h1m1 0h1m22 0h1m2 0h1m16 0h1m4 0h1m52 0h1m14 0h1m54 0h1m5 0h1m8 0h1m7 0h1m11 0h1m11 0h1m5 0h1M118 119h1m15 0h1m31 0h1m18 0h1m89 0h1m5 0h1m23 0h1m7 0h1m6 0h1m0 0h1M123 120h1m17 0h1m35 0h1m0 0h1m10 0h1m19 0h1m55 0h1m8 0h1m26 0h1m18 0h1M114 121h1m34 0h1m37 0h1m14 0h1m60 0h1M105 122h1m24 0h1m3 0h1m2 0h1m1 0h1m2 0h1m141 0h1m0 0h1m9 0h1m0 0h1m5 0h1m7 0h1m6 0h1M74 123h1m2 0h1m21 0h1m37 0h1m1 0h1m17 0h1m23 0h1m5 0h1m10 0h1m60 0h1m5 0h1m22 0h1m12 0h1m3 0h1m4 0h1m2 0h1m11 0h1M75 124h1m3 0h1m14 0h1m17 0h1m25 0h1m66 0h1m53 0h1m20 0h1m1 0h1m4 0h1m15 0h1m6 0h1m5 0h1M78 125h1m4 0h1m11 0h1m6 0h1m43 0h1m7 0h1m6 0h1m0 0h1m23 0h1m20 0h1m57 0h1m6 0h1m5 0h1m16 0h1m30 0h1M77 126h1m62 0h1m25 0h1m42 0h1m49 0h1m1 0h1m5 0h1m18 0h1m2 0h1m10 0h1m0 0h1m2 0h1m20 0h1m3 0h1M93 127h1m0 0h1m71 0h1m14 0h1m2 0h1m0 0h1m2 0h1m13 0h1m76 0h1m8 0h1m6 0h1m4 0h1m29 0h1M74 128h1m49 0h1m7 0h1m4 0h1m50 0h1m73 0h1m1 0h1m22 0h1m5 0h1M79 129h1m0 0h1m2 0h1m36 0h1m34 0h1m17 0h1m14 0h1m12 0h1m94 0h1m21 0h1m1 0h1M82 130h1m87 0h1m0 0h1m2 0h1m14 0h1m0 0h1m2 0h1m6 0h1m3 0h1m74 0h1m6 0h1m33 0h1M73 131h1m27 0h1m2 0h1m54 0h1m2 0h1m0 0h1m5 0h1m22 0h1m2 0h1m70 0h1m0 0h1m16 0h1M81 132h1m77 0h1m4 0h1m7 0h1m0 0h1m4 0h1m6 0h1m3 0h1m6 0h1m8 0h1m3 0h1m49 0h1m1 0h1m14 0h1m56 0h1M83 133h1m0 0h1m42 0h1m0 0h1m5 0h1m0 0h1m0 0h1m20 0h1m11 0h1m5 0h1m38 0h1m46 0h1m4 0h1m3 0h1m2 0h1m5 0h1m1 0h1m38 0h1m12 0h1M71 134h1m58 0h1m2 0h1m25 0h1m12 0h1m12 0h1m28 0h1m48 0h1m11 0h1m1 0h1m42 0h1m12 0h1M75 135h1m4 0h1m84 0h1m6 0h1m19 0h1m9 0h1m0 0h1m59 0h1m15 0h1m38 0h1m10 0h1M71 136h1m0 0h1m1 0h1m87 0h1m0 0h1m153 0h1m9 0h1M117 137h1m0 0h1m4 0h1m9 0h1m13 0h1m118 0h1m10 0h1m10 0h1m30 0h1M71 138h1m3 0h1m1 0h1m38 0h1m3 0h1m8 0h1m1 0h1m17 0h1m27 0h1m80 0h1m7 0h1m0 0h1m9 0h1m8 0h1m40 0h1M71 139h1m52 0h1m25 0h1m1 0h1m7 0h1m6 0h1m110 0h1m1 0h1m1 0h1m1 0h1m0 0h1m1 0h1M67 140h1m3 0h1m3 0h1m14 0h1m28 0h1m0 0h1m17 0h1m2 0h1m30 0h1m6 0h1m7 0h1m2 0h1m3 0h1m20 0h1m0 0h1m44 0h1m1 0h1m3 0h1m9 0h1m1 0h1m2 0h1m40 0h1m1 0h1M64 141h1m9 0h1m0 0h1m8 0h1m2 0h1m31 0h1m27 0h1m3 0h1m11 0h1m11 0h1m1 0h1m100 0h1m7 0h1m43 0h1M64 142h1m13 0h1m0 0h1m29 0h1m9 0h1m27 0h1m20 0h1m94 0h1m16 0h1m41 0h1m9 0h1M66 143h1m15 0h1m6 0h1m32 0h1m10 0h1m3 0h1m2 0h1m8 0h1m45 0h1m4 0h1m7 0h1M92 144h1m10 0h1m9 0h1m13 0h1m22 0h1m26 0h1m87 0h1m8 0h1m7 0h1m0 0h1m44 0h1m3 0h1M62 145h1m7 0h1m1 0h1m2 0h1m4 0h1m0 0h1m33 0h1m8 0h1m7 0h1m9 0h1m41 0h1m13 0h1m1 0h1m57 0h1m2 0h1m5 0h1m1 0h1m0 0h1M65 146h1m15 0h1m0 0h1m28 0h1m5 0h1m6 0h1m2 0h1m23 0h1m0 0h1m11 0h1m6 0h1m26 0h1m14 0h1m49 0h1m69 0h1M69 147h1m39 0h1m19 0h1m21 0h1m28 0h1m11 0h1m7 0h1m58 0h1m1 0h1m1 0h1m6 0h1m51 0h1M63 148h1m6 0h1m1 0h1m4 0h1m3 0h1m8 0h1m19 0h1m66 0h1m15 0h1m79 0h1m13 0h1M61 149h1m7 0h1m24 0h1m15 0h1m8 0h1m3 0h1m21 0h1m1 0h1m9 0h1m22 0h1m2 0h1m17 0h1m75 0h1m53 0h1M67 150h1m22 0h1m0 0h1m42 0h1m2 0h1m65 0h1m67 0h1m5 0h1m7 0h1m39 0h1M71 151h1m4 0h1m42 0h1m31 0h1m44 0h1m9 0h1m5 0h1m4 0h1m46 0h1m10 0h1m2 0h1m1 0h1m48 0h1m1 0h1M58 152h1m1 0h1m9 0h1m23 0h1m26 0h1m5 0h1m3 0h1m0 0h1m3 0h1m2 0h1m15 0h1m31 0h1m3 0h1m11 0h1m3 0h1m0 0h1m51 0h1m2 0h1M62 153h1m11 0h1m36 0h1m40 0h1m27 0h1m95 0h1M74 154h1m0 0h1m75 0h1m49 0h1m6 0h1m65 0h1m47 0h1m6 0h1M74 155h1m59 0h1m143 0h1m1 0h1m7 0h1m31 0h1m0 0h1m0 0h1m2 0h1M63 156h1m73 0h1m50 0h1m3 0h1m4 0h1m0 0h1m10 0h1m64 0h1m6 0h1m0 0h1m0 0h1m2 0h1m40 0h1M59 157h1m8 0h1m67 0h1m12 0h1m1 0h1m0 0h1m26 0h1m9 0h1m9 0h1m15 0h1m52 0h1m4 0h1M59 158h1m66 0h1m0 0h1m4 0h1m8 0h1m0 0h1m26 0h1m6 0h1m5 0h1m2 0h1m26 0h1m51 0h1m60 0h1m1 0h1M55 159h1m11 0h1m56 0h1m19 0h1m2 0h1m1 0h1m24 0h1m22 0h1m18 0h1m47 0h1m20 0h1M58 160h1m4 0h1m72 0h1m0 0h1m39 0h1m10 0h1m74 0h1M57 161h1m80 0h1m10 0h1m15 0h1m8 0h1m11 0h1m12 0h1m10 0h1m68 0h1m0 0h1M59 162h1m11 0h1m4 0h1m0 0h1m92 0h1m1 0h1m7 0h1m23 0h1m68 0h1m4 0h1M61 163h1m2 0h1m0 0h1m10 0h1m87 0h1m22 0h1m6 0h1m4 0h1m2 0h1m2 0h1m2 0h1m60 0h1m5 0h1m5 0h1m0 0h1M62 164h1m10 0h1m75 0h1m11 0h1m4 0h1m4 0h1m12 0h1m12 0h1m2 0h1m2 0h1m58 0h1m1 0h1m4 0h1m0 0h1M58 165h1m9 0h1m2 0h1m124 0h1m1 0h1m1 0h1m2 0h1m2 0h1M66 166h1m7 0h1m1 0h1m0 0h1m83 0h1m2 0h1m16 0h1m4 0h1m3 0h1m20 0h1m73 0h1M61 167h1m0 0h1m1 0h1m0 0h1m8 0h1m69 0h1m9 0h1m10 0h1m3 0h1m9 0h1m8 0h1m95 0h1M61 168h1m1 0h1m7 0h1m71 0h1m0 0h1m16 0h1m5 0h1m8 0h1m4 0h1m24 0h1m58 0h1m9 0h1M58 169h1m11 0h1m87 0h1m12 0h1m10 0h1m94 0h1M71 170h1m4 0h1m63 0h1m3 0h1m15 0h1m37 0h1m6 0h1m67 0h1m0 0h1m1 0h1m52 0h1M68 171h1m80 0h1m0 0h1m0 0h1m10 0h1m3 0h1m21 0h1m12 0h1m11 0h1m54 0h1m13 0h1m3 0h1m44 0h1M58 172h1m0 0h1m6 0h1m11 0h1m91 0h1m11 0h1m22 0h1m0 0h1m13 0h1m61 0h1m3 0h1M74 173h1m74 0h1m28 0h1m0 0h1m6 0h1m44 0h1m38 0h1M60 174h1m0 0h1m1 0h1m6 0h1m2 0h1m99 0h1m4 0h1m18 0h1m6 0h1m59 0h1m17 0h1m45 0h1m0 0h1m1 0h1M66 175h1m0 0h1m3 0h1m5 0h1m75 0h1m7 0h1m9 0h1m29 0h1m2 0h1m65 0h1m14 0h1m42 0h1m0 0h1m0 0h1m0 0h1M69 176h1m6 0h1m64 0h1m1 0h1m6 0h1m12 0h1m6 0h1m29 0h1m33 0h1m25 0h1m9 0h1m15 0h1m44 0h1M72 177h1m71 0h1m9 0h1m13 0h1m8 0h1m14 0h1m11 0h1m0 0h1m29 0h1m39 0h1m1 0h1m53 0h1M63 178h1m96 0h1m0 0h1m7 0h1m1 0h1m19 0h1m42 0h1m42 0h1m8 0h1m41 0h1m0 0h1m2 0h1M144 179h1m4 0h1m19 0h1m2 0h1m6 0h1m0 0h1m18 0h1m22 0h1m11 0h1m28 0h1m11 0h1m41 0h1m9 0h1m0 0h1m1 0h1m1 0h1M71 180h1m1 0h1m1 0h1m77 0h1m6 0h1m26 0h1m19 0h1m23 0h1m33 0h1m5 0h1m7 0h1m33 0h1m5 0h1M80 181h1m72 0h1m1 0h1m12 0h1m1 0h1m1 0h1m1 0h1m14 0h1m8 0h1m42 0h1m20 0h1m13 0h1m1 0h1m4 0h1m48 0h1M63 182h1m6 0h1m7 0h1m1 0h1m63 0h1m20 0h1m18 0h1m16 0h1m27 0h1m43 0h1m60 0h1M67 183h1m8 0h1m77 0h1m26 0h1m8 0h1m0 0h1m3 0h1m5 0h1m42 0h1m15 0h1m18 0h1m1 0h1m27 0h1m21 0h1m0 0h1m1 0h1M64 184h1m13 0h1m3 0h1m61 0h1m0 0h1m0 0h1m0 0h1m28 0h1m15 0h1m10 0h1m3 0h1m1 0h1m35 0h1m10 0h1m0 0h1m11 0h1m4 0h1m0 0h1m54 0h1M63 185h1m9 0h1m2 0h1m2 0h1m69 0h1m55 0h1m3 0h1m23 0h1m0 0h1m9 0h1m24 0h1m43 0h1m21 0h1M68 186h1m10 0h1m62 0h1m3 0h1m0 0h1m4 0h1m11 0h1m32 0h1m86 0h1m0 0h1m4 0h1m39 0h1m1 0h1M147 187h1m22 0h1m4 0h1m14 0h1m13 0h1m46 0h1m3 0h1m11 0h1m18 0h1M70 188h1m81 0h1m6 0h1m12 0h1m15 0h1m14 0h1m4 0h1m17 0h1m35 0h1m28 0h1m41 0h1m0 0h1M68 189h1m87 0h1m13 0h1m2 0h1m35 0h1m13 0h1m3 0h1m4 0h1m18 0h1m3 0h1m4 0h1m1 0h1m12 0h1m14 0h1m39 0h1M46 190h1m0 0h1m29 0h1m4 0h1m2 0h1m60 0h1m2 0h1m2 0h1m31 0h1m15 0h1m2 0h1m7 0h1m6 0h1m25 0h1m33 0h1m29 0h1m21 0h1M73 191h1m94 0h1m0 0h1m2 0h1m11 0h1m2 0h1m5 0h1m65 0h1m3 0h1m0 0h1m7 0h1m6 0h1m3 0h1m4 0h1m1 0h1m1 0h1m37 0h1m1 0h1m0 0h1m0 0h1M44 192h1m26 0h1m5 0h1m0 0h1m1 0h1m66 0h1m30 0h1m5 0h1m23 0h1m47 0h1m9 0h1M42 193h1m41 0h1m1 0h1m61 0h1m1 0h1m0 0h1m1 0h1m19 0h1m16 0h1m31 0h1m5 0h1m9 0h1m14 0h1m14 0h1m20 0h1m38 0h1m3 0h1M44 194h1m36 0h1m52 0h1m4 0h1m26 0h1m3 0h1m5 0h1m4 0h1m9 0h1m0 0h1m5 0h1m3 0h1m39 0h1m0 0h1m11 0h1m2 0h1m3 0h1m2 0h1m12 0h1m0 0h1m48 0h1m1 0h1M71 195h1m7 0h1m0 0h1m0 0h1m52 0h1m9 0h1m30 0h1m25 0h1m0 0h1m14 0h1m10 0h1m7 0h1m12 0h1m2 0h1m4 0h1m6 0h1m3 0h1m2 0h1m1 0h1m12 0h1m22 0h1m18 0h1m0 0h1m0 0h1M42 196h1m42 0h1m68 0h1m25 0h1m11 0h1m1 0h1m6 0h1m44 0h1m0 0h1m17 0h1m11 0h1m32 0h1m0 0h1m0 0h1m16 0h1m0 0h1M76 197h1m71 0h1m5 0h1m0 0h1m0 0h1m1 0h1m4 0h1m4 0h1m2 0h1m17 0h1m45 0h1m5 0h1m1 0h1m9 0h1m4 0h1m3 0h1m5 0h1m8 0h1m7 0h1m3 0h1m17 0h1m2 0h1m2 0h1m1 0h1m9 0h1m0 0h1m0 0h1m2 0h1m1 0h1M39 198h1m36 0h1m5 0h1m5 0h1m40 0h1m7 0h1m1 0h1m5 0h1m3 0h1m9 0h1m57 0h1m14 0h1m2 0h1m26 0h1m8 0h1m1 0h1m9 0h1m25 0h1m2 0h1M38 199h1m1 0h1m38 0h1m69 0h1m11 0h1m8 0h1m5 0h1m27 0h1m17 0h1m11 0h1m1 0h1m4 0h1m16 0h1m14 0h1m38 0h1m5 0h1m0 0h1m3 0h1m0 0h1m2 0h1m0 0h1M75 200h1m12 0h1m96 0h1m0 0h1m24 0h1m7 0h1m26 0h1m5 0h1m62 0h1m1 0h1m0 0h1m2 0h1m1 0h1m4 0h1m1 0h1M45 201h1m28 0h1m0 0h1m7 0h1m64 0h1m0 0h1m14 0h1m0 0h1m4 0h1m9 0h1m6 0h1m8 0h1m11 0h1m1 0h1m10 0h1m4 0h1m16 0h1m23 0h1m7 0h1m3 0h1m36 0h1M36 202h1m2 0h1m118 0h1m22 0h1m29 0h1m37 0h1m17 0h1m2 0h1m2 0h1m46 0h1m4 0h1M43 203h1m0 0h1m40 0h1m35 0h1m0 0h1m15 0h1m5 0h1m8 0h1m6 0h1m19 0h1m17 0h1m7 0h1m33 0h1m1 0h1m2 0h1m3 0h1m1 0h1m0 0h1m4 0h1m11 0h1m48 0h1m1 0h1m2 0h1M39 204h1m5 0h1m28 0h1m1 0h1m5 0h1m1 0h1m5 0h1m31 0h1m9 0h1m14 0h1m14 0h1m5 0h1m17 0h1m3 0h1m31 0h1m6 0h1m27 0h1m5 0h1m9 0h1m0 0h1m0 0h1m44 0h1M37 205h1m1 0h1m39 0h1m4 0h1m57 0h1m7 0h1m0 0h1m12 0h1m4 0h1m3 0h1m1 0h1m13 0h1m7 0h1m48 0h1m6 0h1m14 0h1m6 0h1m2 0h1M36 206h1m2 0h1m1 0h1m128 0h1m20 0h1m1 0h1m15 0h1m28 0h1m2 0h1m0 0h1m25 0h1m5 0h1m0 0h1m0 0h1M33 207h1m1 0h1m2 0h1m3 0h1m0 0h1m33 0h1m1 0h1m44 0h1m0 0h1m48 0h1m85 0h1M83 208h1m36 0h1m75 0h1m2 0h1m2 0h1m4 0h1M33 209h1m124 0h1m11 0h1m28 0h1m34 0h1M33 210h1m0 0h1m2 0h1m38 0h1m46 0h1m1 0h1m2 0h1m15 0h1m2 0h1m20 0h1m3 0h1m9 0h1m12 0h1m3 0h1m10 0h1M36 211h1m4 0h1m88 0h1m5 0h1m4 0h1m21 0h1m8 0h1m4 0h1m3 0h1M74 212h1m8 0h1m66 0h1m16 0h1m24 0h1m0 0h1m46 0h1m36 0h1M35 213h1m1 0h1m0 0h1m3 0h1m2 0h1m3 0h1m22 0h1m6 0h1m0 0h1m36 0h1m21 0h1m7 0h1m60 0h1m5 0h1m24 0h1m8 0h1m12 0h1m16 0h1M47 214h1m33 0h1m6 0h1m29 0h1m12 0h1m5 0h1m4 0h1m1 0h1m2 0h1m3 0h1m0 0h1m52 0h1m17 0h1M40 215h1m10 0h1m19 0h1m14 0h1m78 0h1m15 0h1m16 0h1m11 0h1M45 216h1m8 0h1m19 0h1m5 0h1m5 0h1m32 0h1m5 0h1m2 0h1m3 0h1m1 0h1m13 0h1m41 0h1m16 0h1m0 0h1m1 0h1m0 0h1m36 0h1M43 217h1m0 0h1m2 0h1m4 0h1m4 0h1m0 0h1m17 0h1m3 0h1m28 0h1m14 0h1m17 0h1m3 0h1m3 0h1m7 0h1m30 0h1m1 0h1m15 0h1m2 0h1m10 0h1M53 218h1m11 0h1m42 0h1m14 0h1m17 0h1m10 0h1m0 0h1m13 0h1m1 0h1m1 0h1m38 0h1M49 219h1m13 0h1m45 0h1m7 0h1m34 0h1m12 0h1m1 0h1m21 0h1m10 0h1m4 0h1m13 0h1m6 0h1M55 220h1m2 0h1m0 0h1m6 0h1m7 0h1m9 0h1m23 0h1m10 0h1m12 0h1m1 0h1m13 0h1m6 0h1m14 0h1m3 0h1m13 0h1M52 221h1m6 0h1m3 0h1m6 0h1m4 0h1m5 0h1m3 0h1m27 0h1m3 0h1m2 0h1m8 0h1m46 0h1m34 0h1m17 0h1m40 0h1M48 222h1m10 0h1m6 0h1m13 0h1m27 0h1m0 0h1m5 0h1m4 0h1m6 0h1m16 0h1m1 0h1m4 0h1m12 0h1m15 0h1m0 0h1m14 0h1m1 0h1m1 0h1m12 0h1m16 0h1m0 0h1m13 0h1m26 0h1m3 0h1m8 0h1M55 223h1m2 0h1m4 0h1m17 0h1m26 0h1m9 0h1m9 0h1m7 0h1m9 0h1m8 0h1m8 0h1m0 0h1m5 0h1m15 0h1m1 0h1M70 224h1m11 0h1m34 0h1m15 0h1m7 0h1m0 0h1m8 0h1m14 0h1m1 0h1m8 0h1m13 0h1m15 0h1m9 0h1m74 0h1M46 225h1m3 0h1m3 0h1m1 0h1m0 0h1m2 0h1m3 0h1m73 0h1m2 0h1m13 0h1m11 0h1m8 0h1m25 0h1m12 0h1m72 0h1M47 226h1m16 0h1m9 0h1m1 0h1m32 0h1m10 0h1m2 0h1m11 0h1m2 0h1m17 0h1m6 0h1m21 0h1m18 0h1m20 0h1m16 0h1m15 0h1m0 0h1m6 0h1M49 227h1m2 0h1m17 0h1m40 0h1m21 0h1m1 0h1m16 0h1m18 0h1m6 0h1m18 0h1m18 0h1M48 228h1m2 0h1m0 0h1m13 0h1m52 0h1m1 0h1m6 0h1m12 0h1m4 0h1m9 0h1m6 0h1m2 0h1m11 0h1m0 0h1m5 0h1m1 0h1M60 229h1m2 0h1m55 0h1m13 0h1m48 0h1m13 0h1m27 0h1m9 0h1m9 0h1M70 230h1m48 0h1m5 0h1m16 0h1m23 0h1m15 0h1M65 231h1m66 0h1m2 0h1m4 0h1m1 0h1m2 0h1m9 0h1m16 0h1m6 0h1m0 0h1m6 0h1m30 0h1m0 0h1M67 232h1m48 0h1m6 0h1m1 0h1m8 0h1m3 0h1m1 0h1m13 0h1m0 0h1m4 0h1m1 0h1m0 0h1m0 0h1m63 0h1m3 0h1m34 0h1M111 233h1m7 0h1m16 0h1m3 0h1m0 0h1m1 0h1m13 0h1m4 0h1m11 0h1m13 0h1m28 0h1m8 0h1M113 234h1m11 0h1m3 0h1m1 0h1m9 0h1m1 0h1m0 0h1m21 0h1m11 0h1m1 0h1m4 0h1m5 0h1m19 0h1m2 0h1m1 0h1m5 0h1m6 0h1m11 0h1m29 0h1m9 0h1m19 0h1M154 235h1m2 0h1m0 0h1m1 0h1m4 0h1m9 0h1m3 0h1m1 0h1m7 0h1m33 0h1m12 0h1m48 0h1m13 0h1M127 236h1m0 0h1m5 0h1m7 0h1m0 0h1m4 0h1m10 0h1m3 0h1m0 0h1m1 0h1m5 0h1m11 0h1m0 0h1m12 0h1m17 0h1m10 0h1m2 0h1M132 237h1m24 0h1m7 0h1m16 0h1m12 0h1m8 0h1m24 0h1m46 0h1m21 0h1M121 238h1m0 0h1m2 0h1m5 0h1m3 0h1m5 0h1m15 0h1m10 0h1m6 0h1m7 0h1m6 0h1m10 0h1m1 0h1m18 0h1m11 0h1m8 0h1m7 0h1m12 0h1M121 239h1m2 0h1m24 0h1m3 0h1m8 0h1m2 0h1m0 0h1m8 0h1m16 0h1m1 0h1m2 0h1m11 0h1m8 0h1m0 0h1m9 0h1M119 240h1m3 0h1m8 0h1m1 0h1m24 0h1m5 0h1m12 0h1m23 0h1m3 0h1m27 0h1m0 0h1m24 0h1M112 241h1m37 0h1m4 0h1m20 0h1m30 0h1m0 0h1m3 0h1m11 0h1m3 0h1m5 0h1m59 0h1M115 242h1m0 0h1m13 0h1m8 0h1m7 0h1m10 0h1m8 0h1m3 0h1m0 0h1m6 0h1m15 0h1m16 0h1m0 0h1m4 0h1m7 0h1m9 0h1m17 0h1M117 243h1m61 0h1m6 0h1m13 0h1m20 0h1m8 0h1m14 0h1M134 244h1m1 0h1m4 0h1m4 0h1m3 0h1m6 0h1m26 0h1m9 0h1m0 0h1m9 0h1m6 0h1m0 0h1m6 0h1m2 0h1m8 0h1m2 0h1M116 245h1m18 0h1m1 0h1m9 0h1m26 0h1m11 0h1m12 0h1m1 0h1m23 0h1m2 0h1m10 0h1m5 0h1m11 0h1M116 246h1m1 0h1m38 0h1m11 0h1m4 0h1m7 0h1m10 0h1m28 0h1m0 0h1m0 0h1m4 0h1m15 0h1m48 0h1M115 247h1m29 0h1m12 0h1m5 0h1m1 0h1m30 0h1m10 0h1m24 0h1m10 0h1m35 0h1M116 248h1m10 0h1m0 0h1m12 0h1m1 0h1m0 0h1m1 0h1m1 0h1m13 0h1m27 0h1m11 0h1m18 0h1m58 0h1M142 249h1m28 0h1m3 0h1m4 0h1m39 0h1m51 0h1M117 250h1m0 0h1m1 0h1m5 0h1m12 0h1m9 0h1m45 0h1m2 0h1m0 0h1m0 0h1m29 0h1m1 0h1m0 0h1m3 0h1M119 251h1m4 0h1m4 0h1m2 0h1m11 0h1m21 0h1m22 0h1m9 0h1m0 0h1m16 0h1m9 0h1m50 0h1m3 0h1m22 0h1M120 252h1m5 0h1m17 0h1m4 0h1m0 0h1m0 0h1m32 0h1m41 0h1m3 0h1m2 0h1m25 0h1M113 253h1m11 0h1m1 0h1m2 0h1m13 0h1m9 0h1m0 0h1m8 0h1m13 0h1m15 0h1m32 0h1m2 0h1m55 0h1m11 0h1M136 254h1m0 0h1m24 0h1m0 0h1m4 0h1m1 0h1m3 0h1m7 0h1m3 0h1m10 0h1m8 0h1m12 0h1m1 0h1m4 0h1m40 0h1m13 0h1m14 0h1M122 255h1m0 0h1m0 0h1m4 0h1m1 0h1m2 0h1m21 0h1m59 0h1m48 0h1m37 0h1M140 256h1m1 0h1m6 0h1m26 0h1m8 0h1m14 0h1m21 0h1m5 0h1m16 0h1M134 257h1m16 0h1m1 0h1m5 0h1m9 0h1m26 0h1m13 0h1M120 258h1m9 0h1m13 0h1m1 0h1m7 0h1m34 0h1m1 0h1m27 0h1m22 0h1m56 0h1M131 259h1m39 0h1m13 0h1m28 0h1m13 0h1m8 0h1M125 260h1m5 0h1m5 0h1m5 0h1m8 0h1m10 0h1m20 0h1m7 0h1m38 0h1m54 0h1M119 261h1m2 0h1m1 0h1m12 0h1m6 0h1m36 0h1m0 0h1m9 0h1m44 0h1m2 0h1m20 0h1m20 0h1m5 0h1m8 0h1M132 262h1m75 0h1m74 0h1M144 263h1m1 0h1m29 0h1m6 0h1m9 0h1m2 0h1m0 0h1m31 0h1M130 264h1m2 0h1m8 0h1m1 0h1m6 0h1m4 0h1m24 0h1m4 0h1m3 0h1m64 0h1M134 265h1m5 0h1m11 0h1m2 0h1m15 0h1m25 0h1m5 0h1m8 0h1m1 0h1m15 0h1m0 0h1m1 0h1m9 0h1M119 266h1m27 0h1m5 0h1m13 0h1m23 0h1m31 0h1m5 0h1m22 0h1m1 0h1m6 0h1M125 267h1m2 0h1m19 0h1m18 0h1m1 0h1m1 0h1m4 0h1m5 0h1m14 0h1m1 0h1m14 0h1m26 0h1m32 0h1m2 0h1m6 0h1m11 0h1M120 268h1m2 0h1m2 0h1m9 0h1m12 0h1m2 0h1m8 0h1m10 0h1m97 0h1M125 269h1m20 0h1m8 0h1m1 0h1m10 0h1m25 0h1m45 0h1m12 0h1m16 0h1M120 270h1m48 0h1m15 0h1m7 0h1m5 0h1m24 0h1m12 0h1m2 0h1m18 0h1m30 0h1m0 0h1m5 0h1M160 271h1m10 0h1m33 0h1m0 0h1m22 0h1m16 0h1m9 0h1m6 0h1m41 0h1M129 272h1m0 0h1m0 0h1m8 0h1m5 0h1m9 0h1m12 0h1m23 0h1m4 0h1m3 0h1m65 0h1M120 273h1m22 0h1m6 0h1m5 0h1m35 0h1m5 0h1m11 0h1m12 0h1m45 0h1M135 274h1m44 0h1m0 0h1m2 0h1m16 0h1m25 0h1m5 0h1M118 275h1m29 0h1m4 0h1m23 0h1m9 0h1m48 0h1M133 276h1m13 0h1m12 0h1m2 0h1m6 0h1m22 0h1m39 0h1m29 0h1m3 0h1m0 0h1M119 277h1m28 0h1m3 0h1M120 278h1m16 0h1m6 0h1m13 0h1m7 0h1m2 0h1m16 0h1m6 0h1m3 0h1M135 279h1m9 0h1m0 0h1m6 0h1m40 0h1m2 0h1m5 0h1m16 0h1m37 0h1m25 0h1M119 280h1m6 0h1m13 0h1m22 0h1m14 0h1m10 0h1m4 0h1m34 0h1m56 0h1M123 281h1m72 0h1m5 0h1m10 0h1m5 0h1m0 0h1M159 282h1m4 0h1m4 0h1m5 0h1m6 0h1m32 0h1M121 283h1m26 0h1m8 0h1m10 0h1m18 0h1m14 0h1m5 0h1m40 0h1m29 0h1M162 284h1m13 0h1m4 0h1m2 0h1m67 0h1m25 0h1M119 285h1m7 0h1m0 0h1m8 0h1m12 0h1m16 0h1m12 0h1m14 0h1m6 0h1m0 0h1m32 0h1m1 0h1m5 0h1M152 286h1m17 0h1m7 0h1m19 0h1m0 0h1m4 0h1m2 0h1m57 0h1m12 0h1m8 0h1M121 287h1m16 0h1m17 0h1m1 0h1m5 0h1m18 0h1m4 0h1m2 0h1m1 0h1m1 0h1m21 0h1m11 0h1m3 0h1m3 0h1m9 0h1m12 0h1M134 288h1m22 0h1m32 0h1m78 0h1m13 0h1m16 0h1M126 289h1m1 0h1m33 0h1m28 0h1m3 0h1m8 0h1m24 0h1m12 0h1M133 290h1m4 0h1m3 0h1m1 0h1m14 0h1m3 0h1m21 0h1m14 0h1m30 0h1m28 0h1m15 0h1M121 291h1m10 0h1m6 0h1m3 0h1m27 0h1m16 0h1m3 0h1m0 0h1m4 0h1m0 0h1m7 0h1m0 0h1m10 0h1m2 0h1m7 0h1m8 0h1m0 0h1m21 0h1m20 0h1m7 0h1M127 292h1m27 0h1m26 0h1m4 0h1m63 0h1m11 0h1m7 0h1m3 0h1m13 0h1M136 293h1m18 0h1m14 0h1m1 0h1m7 0h1m5 0h1m0 0h1m6 0h1m0 0h1m34 0h1m20 0h1m5 0h1m8 0h1m7 0h1m16 0h1M136 294h1m19 0h1m3 0h1m8 0h1m1 0h1m1 0h1m8 0h1m38 0h1m22 0h1m56 0h1M137 295h1m1 0h1m3 0h1m13 0h1m3 0h1m1 0h1m4 0h1m2 0h1m12 0h1m12 0h1m16 0h1m34 0h1m5 0h1M155 296h1m16 0h1m4 0h1m0 0h1m0 0h1m13 0h1m2 0h1m14 0h1m0 0h1m2 0h1m25 0h1m7 0h1m22 0h1m8 0h1m2 0h1M126 297h1m10 0h1m9 0h1m5 0h1m43 0h1m46 0h1m9 0h1M131 298h1m1 0h1m0 0h1m18 0h1m10 0h1m12 0h1m2 0h1m2 0h1m0 0h1m7 0h1m8 0h1m21 0h1m0 0h1m25 0h1m4 0h1m21 0h1M132 299h1m3 0h1m8 0h1m4 0h1m21 0h1m0 0h1m0 0h1m14 0h1m1 0h1m13 0h1m11 0h1m2 0h1m54 0h1m0 0h1M137 300h1m37 0h1m6 0h1m22 0h1m2 0h1m87 0h1M175 301h1m3 0h1m17 0h1m6 0h1m55 0h1M136 302h1m1 0h1m3 0h1m2 0h1m14 0h1m9 0h1m2 0h1m17 0h1m1 0h1m6 0h1m0 0h1m68 0h1m2 0h1m26 0h1M127 303h1m3 0h1m37 0h1m3 0h1m6 0h1m2 0h1m2 0h1m38 0h1m54 0h1m2 0h1M129 304h1m4 0h1m3 0h1m18 0h1m15 0h1m0 0h1m7 0h1m0 0h1m37 0h1M126 305h1m5 0h1m30 0h1m7 0h1m11 0h1m6 0h1m0 0h1m0 0h1m0 0h1m8 0h1m17 0h1m2 0h1m15 0h1m3 0h1m22 0h1m22 0h1M143 306h1m19 0h1m6 0h1m1 0h1m8 0h1m2 0h1m10 0h1m25 0h1m24 0h1m6 0h1M175 307h1m97 0h1m14 0h1M130 308h1m25 0h1m5 0h1m0 0h1m0 0h1m17 0h1m18 0h1m34 0h1M149 309h1m26 0h1m3 0h1m1 0h1m8 0h1m7 0h1m7 0h1m70 0h1m11 0h1m4 0h1M132 310h1m2 0h1m3 0h1m0 0h1m19 0h1m1 0h1m45 0h1m20 0h1m29 0h1m13 0h1m0 0h1m5 0h1M132 311h1m25 0h1m18 0h1m6 0h1m2 0h1m0 0h1m6 0h1m31 0h1M128 312h1m11 0h1m3 0h1m19 0h1m5 0h1m3 0h1m0 0h1m0 0h1m10 0h1m10 0h1m8 0h1M147 313h1m2 0h1m5 0h1m0 0h1m27 0h1m25 0h1m28 0h1m7 0h1m18 0h1m1 0h1m9 0h1M144 314h1m7 0h1m13 0h1m4 0h1m0 0h1m0 0h1m24 0h1m26 0h1m14 0h1m20 0h1m8 0h1M145 315h1m1 0h1m24 0h1m1 0h1m19 0h1m32 0h1m23 0h1m1 0h1m25 0h1M134 316h1m0 0h1m0 0h1m19 0h1m8 0h1m9 0h1m3 0h1m0 0h1m0 0h1m1 0h1m6 0h1m8 0h1m7 0h1m36 0h1m20 0h1M132 317h1m3 0h1m8 0h1m1 0h1m26 0h1m2 0h1m9 0h1m5 0h1m15 0h1m0 0h1m22 0h1m22 0h1m12 0h1m1 0h1m1 0h1m10 0h1M130 318h1m0 0h1m4 0h1m12 0h1m10 0h1m0 0h1m18 0h1m4 0h1m14 0h1m48 0h1m11 0h1M145 319h1m8 0h1m10 0h1m11 0h1m24 0h1m2 0h1m2 0h1m15 0h1m7 0h1m27 0h1m3 0h1m2 0h1m23 0h1m1 0h1M155 320h1m0 0h1m2 0h1m0 0h1m2 0h1m2 0h1m0 0h1m0 0h1m0 0h1m1 0h1m2 0h1m9 0h1m8 0h1m1 0h1m0 0h1m3 0h1m5 0h1m29 0h1m15 0h1m6 0h1m19 0h1m7 0h1M145 321h1m3 0h1m5 0h1m20 0h1m0 0h1m0 0h1m19 0h1m11 0h1m1 0h1m16 0h1m0 0h1m6 0h1m30 0h1m18 0h1M183 322h1m11 0h1m3 0h1m1 0h1m1 0h1m8 0h1m28 0h1m12 0h1M135 323h1m7 0h1m24 0h1m9 0h1m9 0h1m0 0h1m2 0h1m50 0h1m7 0h1M159 324h1m3 0h1m0 0h1m3 0h1m5 0h1m22 0h1m14 0h1m29 0h1M155 325h1m21 0h1m15 0h1m8 0h1m1 0h1m4 0h1m3 0h1m1 0h1m43 0h1M140 326h1m8 0h1m18 0h1m1 0h1m0 0h1m1 0h1m2 0h1m6 0h1m10 0h1m15 0h1m0 0h1m7 0h1m40 0h1m21 0h1M148 327h1m6 0h1m13 0h1m0 0h1m5 0h1m4 0h1m31 0h1m6 0h1m11 0h1m7 0h1m2 0h1m25 0h1m1 0h1m4 0h1M146 328h1m3 0h1m26 0h1m2 0h1m6 0h1m22 0h1m32 0h1m3 0h1M138 329h1m7 0h1m6 0h1m28 0h1m2 0h1M192 330h1m9 0h1m0 0h1m26 0h1m12 0h1m22 0h1M143 331h1m5 0h1m10 0h1m9 0h1m5 0h1m0 0h1m17 0h1m61 0h1M153 332h1m15 0h1m1 0h1m5 0h1m5 0h1m0 0h1m9 0h1m33 0h1m7 0h1m3 0h1m10 0h1m9 0h1M153 333h1m15 0h1m5 0h1m6 0h1m5 0h1m5 0h1M148 334h1m26 0h1m6 0h1m5 0h1m0 0h1m29 0h1m2 0h1m13 0h1m0 0h1M151 335h1m3 0h1m15 0h1m6 0h1m2 0h1m1 0h1m7 0h1m3 0h1m38 0h1m21 0h1M165 336h1m1 0h1m6 0h1m2 0h1m7 0h1m8 0h1m23 0h1m13 0h1m11 0h1m6 0h1m0 0h1M147 337h1m6 0h1m10 0h1m6 0h1m4 0h1m3 0h1m5 0h1m28 0h1m31 0h1M156 338h1m1 0h1m0 0h1m10 0h1m19 0h1m8 0h1m36 0h1M157 339h1m4 0h1m8 0h1m18 0h1m7 0h1m49 0h1m14 0h1M157 340h1m2 0h1m25 0h1m38 0h1m16 0h1m6 0h1M166 341h1m4 0h1m10 0h1m1 0h1m49 0h1m6 0h1m6 0h1M147 342h1m7 0h1m7 0h1m4 0h1m3 0h1m68 0h1M147 343h1m1 0h1m0 0h1m25 0h1m9 0h1M159 344h1m4 0h1m0 0h1m4 0h1M146 345h1m7 0h1m4 0h1m10 0h1" stroke="#46a472"/></g></g>
</svg>

<!-- right panel -->
<div class="a" style="left:450px;top:144px;width:287px;height:440px;border:1px solid #b0b0b0;background:#efefef"></div>
<div class="t" style="left:460px;top:154px;letter-spacing:-0.16px">Rendering Options</div>
<div class="t" style="left:460px;top:178px;letter-spacing:-0.33px">Render Mode:</div>
<div class="combo" style="left:539px;top:174px;width:188px;height:22px"><div class="t" style="left:5px;top:3px">Points</div><div class="arr" style="left:172px;top:8.3px"></div></div>
<div class="t" style="left:460px;top:209px;letter-spacing:-0.38px">Raster Size</div>
<div class="a" style="left:540px;top:213px;width:187px;height:5px;border:1px solid #b0b0b0;border-radius:3px;background:#d6d6d6"></div>
<div class="a" style="left:540px;top:209px;width:13px;height:13px;border:1px solid #a8a8a8;border-radius:3px;background:linear-gradient(#fdfdfd,#ececec)"></div>
<div class="t" style="left:460px;top:229px">Shading Options</div>
<div class="t" style="left:460px;top:253px;letter-spacing:-0.24px">Shade Mode:</div>
<div class="combo" style="left:542px;top:249px;width:185px;height:22px"><div class="t" style="left:5px;top:3px">Flat (Generated Normals)</div><div class="arr" style="left:169px;top:8.3px"></div></div>
<div class="t" style="left:460px;top:277px">Normal Rendering Options</div>
<div class="a" style="left:460px;top:300px;width:14px;height:14px;border:1px solid #b0b0b0;background:#fff"></div>
<div class="t" style="left:479px;top:300px">Render Normal Vectors</div>
<div class="t" style="left:460px;top:335px;letter-spacing:0.16px">Attribute Options</div>
<div class="a" style="left:460px;top:358px;width:14px;height:14px;border:1px solid #b0b0b0;background:#fff"></div>
<svg class="a" style="left:460px;top:358px" width="14" height="14"><path d="M3.3 6.2 L6 10.9 L10.6 2.8" fill="none" stroke="#000" stroke-width="1.75"/></svg>
<div class="t" style="left:479px;top:358px;letter-spacing:0.15px">Persist Attributes Per Attribute Configuration</div>
<div class="t" style="left:460px;top:381px">Camera Options</div>
<div class="btn" style="left:460px;top:401px;width:267px;height:22px"></div>
<div class="t" style="left:556px;top:405px;letter-spacing:-0.3px">Reset Camera</div>
<div class="btn" style="left:460px;top:429px;width:267px;height:22px;border-color:#c8c8c8"></div>
<div class="t" style="left:545px;top:433px;color:#bdbdbd;letter-spacing:-0.1px">Zoom To Selected</div>

<!-- bottom bar -->
<div class="t" style="left:26px;top:595px">Position:</div>
<div class="combo" style="left:80px;top:590px;width:147px;height:24px;overflow:hidden"><div class="t" style="left:4px;top:4px;width:120px;overflow:hidden;letter-spacing:-0.45px">0 - POSITION0 (R32G32B32)</div><div class="arr" style="left:131px;top:9px"></div></div>
<div class="t" style="left:233px;top:595px">Color:</div>
<div class="combo" style="left:271px;top:590px;width:146px;height:24px"><div class="t" style="left:5px;top:4px">Diffuse Color</div><div class="arr" style="left:130px;top:9px"></div></div>
<div class="btn" style="left:423px;top:590px;width:24px;height:23px"></div>
<div class="a" style="left:429px;top:595px;width:12.5px;height:12.2px;border:1.5px solid #000;background:#66dd99"></div>
<div class="t" style="left:453px;top:595px;color:#bdbdbd">Normal:</div>
<div class="combo" style="left:503px;top:590px;width:147px;height:24px;border-color:#cfcfcf;background:#efefef"><div class="t" style="left:4px;top:4px;width:120px;overflow:hidden;letter-spacing:-0.45px;color:#bdbdbd">0 - POSITION0 (R32G32B32)</div><div class="arr" style="left:131px;top:9px;border-top-color:#c4c4c4"></div></div>
<div class="btn" style="left:656px;top:590px;width:81px;height:24px;background:#dcdcdc;border-color:#a8a8a8"></div>
<svg class="a" style="left:658px;top:592px" width="20" height="20"><path transform="translate(0.6 2.1) scale(0.88)" d="M4 16 L10 10 A4 4 0 0 1 14.5 4 L12.5 6.5 L13.5 8.5 L15.5 9.5 L18 7.5 A4 4 0 0 1 12 12 L6 18 Z" fill="none" stroke="#000" stroke-width="1.3" stroke-linejoin="round"/></svg>
<div class="t" style="left:678px;top:595px">Configure</div>
</body></html>
